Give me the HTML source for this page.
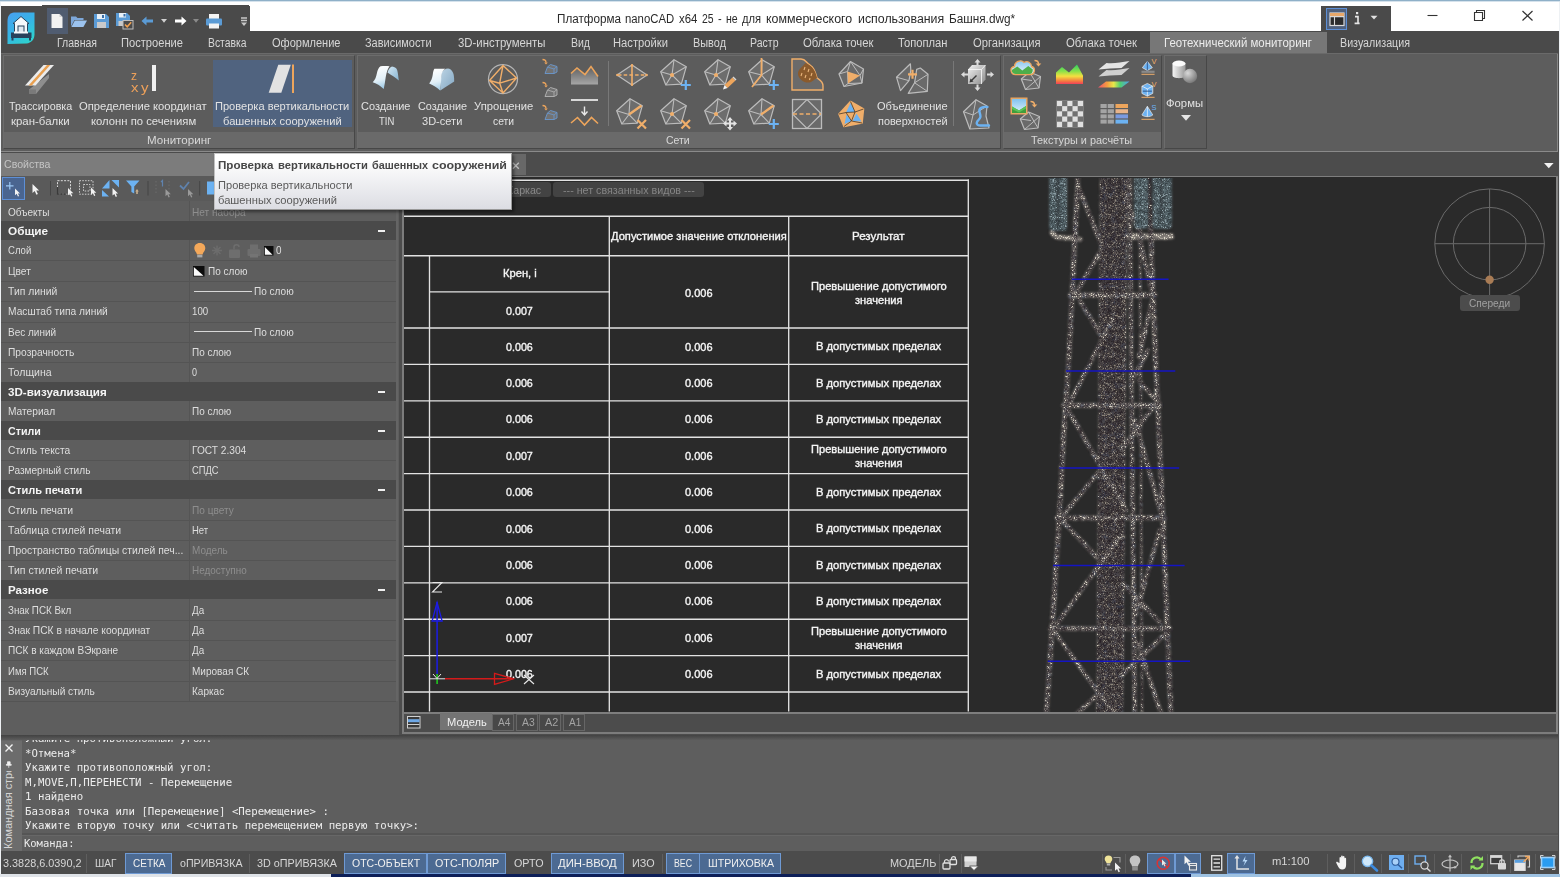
<!DOCTYPE html>
<html lang="ru"><head><meta charset="utf-8"><title>Платформа nanoCAD x64 25 - Башня.dwg</title>
<style>
html,body{margin:0;padding:0;}
body{width:1560px;height:877px;position:relative;overflow:hidden;background:#fff;font-family:"Liberation Sans",sans-serif;}
#app div,#app span,#app svg{position:absolute;box-sizing:border-box;}
#app{position:absolute;left:0;top:0;width:1560px;height:877px;overflow:hidden;}
.t{white-space:nowrap;transform-origin:0 50%;font-family:"Liberation Sans",sans-serif;}
.t.m{font-family:"Liberation Mono",monospace;}
.t.d{font-family:"DejaVu Sans",sans-serif;}
.t.dm{font-family:"DejaVu Sans Mono","Liberation Mono",monospace;}
svg{overflow:visible;}
</style></head><body><div id="app">
<div style="left:0px;top:0px;width:1560px;height:1px;background:#8fb0c8;"></div>
<div style="left:0px;top:1px;width:1560px;height:1px;background:#d5e2ec;"></div>
<div style="left:1px;top:6px;width:249px;height:26px;background:#4a4a4a;"></div>
<div style="left:42px;top:5px;width:207px;height:2px;background:#4a4a4a;"></div>
<div style="left:1px;top:31px;width:1557px;height:22px;background:#4a4a4a;"></div>
<div style="left:1321px;top:5.7px;width:70px;height:26.3px;background:#4a4a4a;"></div>
<span class="t" style="left:556.7px;top:10.5px;font-size:12.5px;line-height:16px;color:#2a2a2a;transform:scaleX(0.9355);">Платформа</span>
<span class="t" style="left:625px;top:10.5px;font-size:12.5px;line-height:16px;color:#2a2a2a;transform:scaleX(0.9077);">nanoCAD</span>
<span class="t" style="left:678.8px;top:10.5px;font-size:12.5px;line-height:16px;color:#2a2a2a;transform:scaleX(0.9130);">x64</span>
<span class="t" style="left:701.7px;top:10.5px;font-size:12.5px;line-height:16px;color:#2a2a2a;transform:scaleX(0.8343);">25</span>
<span class="t" style="left:718px;top:10.5px;font-size:12.5px;line-height:16px;color:#2a2a2a;transform:scaleX(0.8888);">-</span>
<span class="t" style="left:725.8px;top:10.5px;font-size:12.5px;line-height:16px;color:#2a2a2a;transform:scaleX(0.8444);">не</span>
<span class="t" style="left:742.2px;top:10.5px;font-size:12.5px;line-height:16px;color:#2a2a2a;transform:scaleX(0.8943);">для</span>
<span class="t" style="left:765.8px;top:10.5px;font-size:12.5px;line-height:16px;color:#2a2a2a;transform:scaleX(0.9920);">коммерческого</span>
<span class="t" style="left:857.5px;top:10.5px;font-size:12.5px;line-height:16px;color:#2a2a2a;transform:scaleX(0.9893);">использования</span>
<span class="t" style="left:949.2px;top:10.5px;font-size:12.5px;line-height:16px;color:#2a2a2a;transform:scaleX(0.9426);">Башня.dwg*</span>
<svg style="left:1420px;top:6px;" width="130" height="22" viewBox="0 0 130 22"><path d="M7.5 9.5h10" stroke="#333" stroke-width="1.1" fill="none"/><path d="M54.5 6.5h8v8h-8z M56.5 6.5v-2h8v8h-2" stroke="#333" stroke-width="1.1" fill="none"/><path d="M102.5 5l10 9.5 M112.5 5l-10 9.5" stroke="#333" stroke-width="1.2" fill="none"/></svg>
<div style="left:1326px;top:8px;width:21px;height:22px;background:#4f607c;border:1px solid #5d8fd6;"></div>
<svg style="left:1329px;top:11px;" width="16" height="16" viewBox="0 0 16 16"><rect x="1" y="2" width="14" height="12.5" fill="#2b2b2b" stroke="#d9d9d9" stroke-width="1.2"/><rect x="1" y="2" width="14" height="3.2" fill="#e8a86a"/><path d="M5.5 5.5v9 M1 5.6h14" stroke="#d9d9d9" stroke-width="1.1"/></svg>
<svg style="left:1352px;top:10px;" width="10" height="16" viewBox="0 0 10 16"><rect x="4" y="2" width="2.2" height="2.2" fill="#e6e6e6"/><path d="M3 6.6h3v6.6 M2.6 13.4h5" stroke="#e6e6e6" stroke-width="1.6" fill="none"/></svg>
<svg style="left:1370px;top:15px;" width="8" height="6" viewBox="0 0 8 6"><path d="M0.5 0.8h7l-3.5 3.8z" fill="#e0e0e0"/></svg>
<svg style="left:5px;top:10.5px;" width="32" height="34" viewBox="0 0 32 34"><defs><linearGradient id="ab" x1="0" y1="0" x2="0.6" y2="1"><stop offset="0" stop-color="#4a9ff0"/><stop offset="0.55" stop-color="#36b4e6"/><stop offset="1" stop-color="#2fd0d0"/></linearGradient></defs>
<path d="M9 1.5h20.5v22c0 5-3.5 8.5-8 9l-19 0.5v-23c0-5 2.5-8.5 6.500-8.500z" fill="url(#ab)"/>
<path d="M16 5.500l8 7h-1.500v9h-13v-9h-1.500z" fill="#f4f8fb" stroke="#27425c" stroke-width="1"/>
<rect x="13" y="15" width="6" height="6.500" fill="#dfe9f1" stroke="#27425c" stroke-width="1"/>
<path d="M6 21.500h20.500v5.500h-20.500z" fill="#27425c"/><path d="M7.500 27v2.500 M25 27v2.500" stroke="#27425c" stroke-width="2"/>
<rect x="9" y="20.500" width="14" height="2" fill="#f4f8fb"/></svg>
<div style="left:47px;top:8px;width:21px;height:26px;background:#505c70;"></div>
<svg style="left:50px;top:13px;" width="14" height="16" viewBox="0 0 14 16"><path d="M1.5 1h8l3 3v11h-11z" fill="#f2f2f2"/><path d="M9.500 1v3h3" fill="#cfcfcf"/></svg>
<svg style="left:70px;top:14px;" width="18" height="14" viewBox="0 0 18 14"><path d="M1 2.500h5l1.500 1.500h6v2h-9l-3.500 6.500z" fill="#7da7d9"/><path d="M4.800 6.500h12.200l-3.600 6.500h-12z" fill="#9cc3ee"/></svg>
<svg style="left:93px;top:13px;" width="17" height="16" viewBox="0 0 17 16"><path d="M1 1h12l3 3v11h-15z" fill="#5b9bd5"/><rect x="4" y="1" width="8" height="5" fill="#e9f1f8"/><rect x="9" y="2" width="2" height="3" fill="#3b6ea5"/><rect x="4" y="9" width="9" height="6" fill="#c9c9c9"/></svg>
<svg style="left:115px;top:12px;" width="19" height="18" viewBox="0 0 19 18"><path d="M1 1h11l3 3v10h-14z" fill="#5b9bd5"/><rect x="4" y="1" width="7" height="4.500" fill="#e9f1f8"/><rect x="8.500" y="2" width="2" height="2.500" fill="#3b6ea5"/><rect x="3.500" y="9" width="6" height="5" fill="#c9c9c9"/><rect x="8" y="8.500" width="10" height="8.500" fill="#4a4a4a" stroke="#bdbdbd" stroke-width="1"/><path d="M10 12.500l2.200 2.300 4-4.500" stroke="#f0a050" stroke-width="1.600" fill="none"/></svg>
<svg style="left:141px;top:16px;" width="13" height="10" viewBox="0 0 13 10"><path d="M0.500 5l5-4.500v3h6.500v3h-6.500v3z" fill="#5b9bd5"/></svg>
<svg style="left:161px;top:19px;" width="6" height="4" viewBox="0 0 6 4"><path d="M0 0h6l-3 3.800z" fill="#d0d0d0"/></svg>
<svg style="left:174px;top:16px;" width="13" height="10" viewBox="0 0 13 10"><path d="M12.500 5l-5-4.500v3h-6.500v3h6.500v3z" fill="#ffffff"/></svg>
<svg style="left:193px;top:19px;" width="6" height="4" viewBox="0 0 6 4"><path d="M0 0h6l-3 3.800z" fill="#8a8a8a"/></svg>
<svg style="left:205px;top:13px;" width="18" height="16" viewBox="0 0 18 16"><rect x="4" y="1" width="10" height="5" fill="#f4f4f4"/><rect x="1" y="5.500" width="16" height="7" rx="1" fill="#5b9bd5"/><rect x="4" y="10.500" width="10" height="5" fill="#f4f4f4"/></svg>
<svg style="left:240px;top:17px;" width="8" height="10" viewBox="0 0 8 10"><path d="M1 1h6 M1 3.500h6" stroke="#c8c8c8" stroke-width="1.300"/><path d="M1 5.500h6l-3 3.500z" fill="#c8c8c8"/></svg>
<div style="left:1150px;top:32px;width:177px;height:21px;background:#777777;"></div>
<span class="t" style="left:56.5px;top:34.9px;font-size:12px;line-height:16px;color:#d6d6d6;transform:scaleX(0.8758);">Главная</span>
<span class="t" style="left:121px;top:34.9px;font-size:12px;line-height:16px;color:#d6d6d6;transform:scaleX(0.9278);">Построение</span>
<span class="t" style="left:207.5px;top:34.9px;font-size:12px;line-height:16px;color:#d6d6d6;transform:scaleX(0.8632);">Вставка</span>
<span class="t" style="left:271.5px;top:34.9px;font-size:12px;line-height:16px;color:#d6d6d6;transform:scaleX(0.9196);">Оформление</span>
<span class="t" style="left:365px;top:34.9px;font-size:12px;line-height:16px;color:#d6d6d6;transform:scaleX(0.9131);">Зависимости</span>
<span class="t" style="left:458px;top:34.9px;font-size:12px;line-height:16px;color:#d6d6d6;transform:scaleX(0.9486);">3D-инструменты</span>
<span class="t" style="left:570.5px;top:34.9px;font-size:12px;line-height:16px;color:#d6d6d6;transform:scaleX(0.8752);">Вид</span>
<span class="t" style="left:613px;top:34.9px;font-size:12px;line-height:16px;color:#d6d6d6;transform:scaleX(0.9347);">Настройки</span>
<span class="t" style="left:692.7px;top:34.9px;font-size:12px;line-height:16px;color:#d6d6d6;transform:scaleX(0.9095);">Вывод</span>
<span class="t" style="left:749.5px;top:34.9px;font-size:12px;line-height:16px;color:#d6d6d6;transform:scaleX(0.8783);">Растр</span>
<span class="t" style="left:802.5px;top:34.9px;font-size:12px;line-height:16px;color:#d6d6d6;transform:scaleX(0.9423);">Облака точек</span>
<span class="t" style="left:898px;top:34.9px;font-size:12px;line-height:16px;color:#d6d6d6;transform:scaleX(0.9333);">Топоплан</span>
<span class="t" style="left:972.5px;top:34.9px;font-size:12px;line-height:16px;color:#d6d6d6;transform:scaleX(0.9326);">Организация</span>
<span class="t" style="left:1066px;top:34.9px;font-size:12px;line-height:16px;color:#d6d6d6;transform:scaleX(0.9490);">Облака точек</span>
<span class="t" style="left:1340px;top:34.9px;font-size:12px;line-height:16px;color:#d6d6d6;transform:scaleX(0.8909);">Визуализация</span>
<span class="t" style="left:1164px;top:34.9px;font-size:12px;line-height:16px;color:#ececec;transform:scaleX(0.9520);">Геотехнический мониторинг</span>
<div style="left:1px;top:53px;width:1557px;height:98px;background:#5d5d5d;"></div>
<div style="left:1px;top:53px;width:1557px;height:1px;background:#6a6a6a;"></div>
<div style="left:1557px;top:54px;width:1.3px;height:97px;background:#868686;"></div>
<div style="left:1px;top:150.9px;width:1557px;height:1.2px;background:#8a8a8a;"></div>
<div style="left:1px;top:152.1px;width:1557px;height:1px;background:#4c4c4c;"></div>
<div style="left:3px;top:55px;width:352px;height:94px;background:#5c5c5c;border:1px solid #474747;border-top-color:#6c6c6c;border-left-color:#6c6c6c;"></div>
<div style="left:4px;top:131.8px;width:350px;height:16.2px;background:#696969;"></div>
<span class="t" style="left:146.7px;top:132.5px;font-size:11.5px;line-height:15px;color:#d8d8d8;transform:scaleX(1.0082);">Мониторинг</span>
<div style="left:357px;top:55px;width:644px;height:94px;background:#5c5c5c;border:1px solid #474747;border-top-color:#6c6c6c;border-left-color:#6c6c6c;"></div>
<div style="left:358px;top:131.8px;width:642px;height:16.2px;background:#6a6a6a;"></div>
<span class="t" style="left:666.3px;top:132.5px;font-size:11.5px;line-height:15px;color:#d8d8d8;transform:scaleX(0.9112);">Сети</span>
<div style="left:1003px;top:55px;width:159px;height:94px;background:#5c5c5c;border:1px solid #474747;border-top-color:#6c6c6c;border-left-color:#6c6c6c;"></div>
<div style="left:1004px;top:131.8px;width:157px;height:16.2px;background:#696969;"></div>
<span class="t" style="left:1031.3px;top:132.5px;font-size:11.5px;line-height:15px;color:#d8d8d8;transform:scaleX(0.9483);">Текстуры и расчёты</span>
<div style="left:1164px;top:55px;width:43px;height:94px;background:#5c5c5c;border:1px solid #474747;border-top-color:#6c6c6c;border-left-color:#6c6c6c;"></div>
<div style="left:213px;top:60px;width:139px;height:67px;background:#50637f;"></div>
<span class="t" style="left:8.7px;top:99.0px;font-size:11.5px;line-height:15px;color:#e2e2e2;transform:scaleX(0.9353);">Трассировка</span>
<span class="t" style="left:10.7px;top:114.0px;font-size:11.5px;line-height:15px;color:#e2e2e2;transform:scaleX(0.9951);">кран-балки</span>
<span class="t" style="left:79px;top:99.0px;font-size:11.5px;line-height:15px;color:#e2e2e2;transform:scaleX(0.9756);">Определение координат</span>
<span class="t" style="left:90.8px;top:114.0px;font-size:11.5px;line-height:15px;color:#e2e2e2;transform:scaleX(0.9803);">колонн по сечениям</span>
<span class="t" style="left:215px;top:99.0px;font-size:11.5px;line-height:15px;color:#e2e2e2;transform:scaleX(0.9628);">Проверка вертикальности</span>
<span class="t" style="left:223px;top:114.0px;font-size:11.5px;line-height:15px;color:#e2e2e2;transform:scaleX(0.9701);">башенных сооружений</span>
<span class="t" style="left:361.3px;top:99.0px;font-size:11.5px;line-height:15px;color:#e2e2e2;transform:scaleX(0.9524);">Создание</span>
<span class="t" style="left:378.7px;top:114.0px;font-size:11.5px;line-height:15px;color:#e2e2e2;transform:scaleX(0.8259);">TIN</span>
<span class="t" style="left:417.7px;top:99.0px;font-size:11.5px;line-height:15px;color:#e2e2e2;transform:scaleX(0.9447);">Создание</span>
<span class="t" style="left:422px;top:114.0px;font-size:11.5px;line-height:15px;color:#e2e2e2;transform:scaleX(0.9598);">3D-сети</span>
<span class="t" style="left:474px;top:99.0px;font-size:11.5px;line-height:15px;color:#e2e2e2;transform:scaleX(0.9768);">Упрощение</span>
<span class="t" style="left:493.3px;top:114.0px;font-size:11.5px;line-height:15px;color:#e2e2e2;transform:scaleX(0.8953);">сети</span>
<span class="t" style="left:876.7px;top:99.0px;font-size:11.5px;line-height:15px;color:#e2e2e2;transform:scaleX(0.9601);">Объединение</span>
<span class="t" style="left:877.7px;top:114.0px;font-size:11.5px;line-height:15px;color:#e2e2e2;transform:scaleX(0.9473);">поверхностей</span>
<span class="t" style="left:1166.3px;top:95.8px;font-size:11.5px;line-height:15px;color:#e2e2e2;transform:scaleX(0.9813);">Формы</span>
<svg style="left:1181px;top:114.5px;" width="10" height="6" viewBox="0 0 10 6"><path d="M0 0h10l-5 5.800z" fill="#e6e6e6"/></svg>
<svg style="left:24px;top:64px;" width="31" height="31" viewBox="0 0 31 31"><path d="M5 25.500l0.500 4.500h6.500l13-16v-4z" fill="#8e8e8e"/><path d="M5 25.500l7 0 0 4.500-6.500 0z" fill="#7a7a7a"/><path d="M19.500 1h10.500l-18.500 20.500h-10.500z" fill="#ececec"/><path d="M23 1h3.300l-18.500 20.500h-3.300z" fill="#e9a050"/></svg>
<span class="t" style="left:131px;top:67.0px;font-size:13px;line-height:17px;color:#eda05a;transform:scaleX(0.9231);">z</span>
<span class="t" style="left:130.5px;top:79.0px;font-size:13px;line-height:17px;color:#eda05a;transform:scaleX(1.1538);">x</span>
<span class="t" style="left:140.5px;top:79.0px;font-size:13px;line-height:17px;color:#eda05a;transform:scaleX(1.1538);">y</span>
<div style="left:152px;top:64.7px;width:4px;height:26px;background:#f0f0f0;"></div>
<svg style="left:268px;top:64px;" width="28" height="30" viewBox="0 0 28 30"><path d="M10.300 0.700h12.500l-9.500 28h-12.600z" fill="#e2e2e2"/><path d="M25 0.500v28.500" stroke="#eda55c" stroke-width="2"/></svg>
<svg style="left:372px;top:65px;" width="28" height="26" viewBox="0 0 28 26"><defs><linearGradient id="tn" x1="0.300" y1="0" x2="0.500" y2="1"><stop offset="0" stop-color="#ffffff"/><stop offset="0.600" stop-color="#e2f0f8"/><stop offset="1" stop-color="#9cc8e4"/></linearGradient><linearGradient id="tn2" x1="0" y1="0" x2="1" y2="1"><stop offset="0" stop-color="#d4e8f4"/><stop offset="1" stop-color="#86b4d2"/></linearGradient></defs>
<path d="M15.500 7.500c1-3 2.500-5.500 4.500-6c3 0.300 4.500 1.500 5.300 4c0.800 3.500 1 6.500 1.500 10c-3.500-3-7.500-5.500-11.300-8z" fill="url(#tn2)"/>
<path d="M8.500 1.300c3-0.300 6-0.300 9 0c-2 2.500-3 6.500-3.800 11c-0.500 4-1.200 8-2 11.700c-3-3-6.500-5-11-6.700c2.500-2.500 3.500-5.500 4.200-9c0.700-3 1.500-5.500 3.600-7z" fill="url(#tn)"/></svg>
<svg style="left:428px;top:67px;" width="28" height="25" viewBox="0 0 28 25"><defs><linearGradient id="tm" x1="0.300" y1="0" x2="0.500" y2="1"><stop offset="0" stop-color="#ffffff"/><stop offset="0.600" stop-color="#e2f0f8"/><stop offset="1" stop-color="#a4cce6"/></linearGradient><linearGradient id="tm2" x1="0" y1="0" x2="1" y2="1"><stop offset="0" stop-color="#bcd4e4"/><stop offset="1" stop-color="#84a8c4"/></linearGradient></defs>
<path d="M13.400 6c1.500-3 4-4.500 6.600-4.500c3.500 0.500 5.200 3.500 5.800 7c0.300 2 0.400 4 0.400 6l-14 9z" fill="url(#tm2)"/>
<path d="M6.400 1.800h10.900c-2.500 1.500-3.600 4-3.900 7.500c-0.300 5-0.600 9.500-1.300 14.100c-3.500-3-6.500-5-10.900-6.800c2-2.500 3-5.500 3.500-8.500c0.300-2.500 0.700-4.800 1.700-6.300z" fill="url(#tm)"/></svg>
<svg style="left:488px;top:64px;" width="30" height="30" viewBox="0 0 30 30"><circle cx="15" cy="15.100" r="14.500" fill="none" stroke="#b4b4b4" stroke-width="1.300"/><path d="M15 1.500L1.500 16.500L15 29L28.500 14Z M15 1.500L11.700 19.200L15 29 M1.500 16.500L11.700 19.200L28.500 14" fill="none" stroke="#f0ae6a" stroke-width="1.400" stroke-linejoin="round"/></svg>
<svg style="left:542px;top:58px;" width="17" height="17" viewBox="0 0 17 17"><path d="M0.500 1.500c2 0 3.500 0.500 3.500 3" stroke="#eda55c" stroke-width="1.300" fill="none"/><path d="M2.200 4.500h3.600l-1.800 2z" fill="#eda55c"/><path d="M3 15.500l2.500-6.500l3-2.500l6.500 2v5.500l-3 1.500z" fill="#727272" stroke="#6a98d0" stroke-width="0.900"/><path d="M5.500 9l6.500 2 3-2.500 M12 11l0 4.500" stroke="#6a98d0" stroke-width="0.800" fill="none"/></svg>
<svg style="left:542px;top:80.5px;" width="17" height="17" viewBox="0 0 17 17"><path d="M0.500 1.500c2 0 3.500 0.500 3.500 3" stroke="#eda55c" stroke-width="1.300" fill="none"/><path d="M2.200 4.500h3.600l-1.800 2z" fill="#eda55c"/><path d="M3 15.500l2.500-6.500l3-2.500l6.500 2v5.500l-3 1.500z" fill="#727272" stroke="#b4b4b4" stroke-width="0.900"/><path d="M5.500 9l6.500 2 3-2.500 M12 11l0 4.500" stroke="#b4b4b4" stroke-width="0.800" fill="none"/></svg>
<svg style="left:542px;top:103.5px;" width="17" height="17" viewBox="0 0 17 17"><path d="M0.500 1.500c2 0 3.500 0.500 3.500 3" stroke="#eda55c" stroke-width="1.300" fill="none"/><path d="M2.200 4.500h3.600l-1.800 2z" fill="#eda55c"/><path d="M3 15.500l2.500-6.500l3-2.500l6.500 2v5.500l-3 1.500z" fill="#727272" stroke="#6a98d0" stroke-width="0.900"/><path d="M5.500 9l6.500 2 3-2.500 M12 11l0 4.500" stroke="#6a98d0" stroke-width="0.800" fill="none"/></svg>
<svg style="left:570px;top:64px;" width="29" height="22" viewBox="0 0 29 22"><defs><linearGradient id="pg" x1="0" y1="0" x2="0" y2="1"><stop offset="0" stop-color="#5e5e5e"/><stop offset="1" stop-color="#a6a6a6"/></linearGradient></defs>
<path d="M1 9.500l6-5.500l8 6.500l6-8l7 10v8h-27z" fill="url(#pg)"/><path d="M1 9.500l6-5.500l8 6.500l6-8l7 10" fill="none" stroke="#eda55c" stroke-width="1.600"/></svg>
<svg style="left:570px;top:98px;" width="29" height="30" viewBox="0 0 29 30"><path d="M1 2h27" stroke="#d8d8d8" stroke-width="2"/><path d="M14.500 8.500v8 M11.500 13.500l3 3.500 3-3.500" stroke="#e8e8e8" stroke-width="1.400" fill="none"/><path d="M1 25l6.500-5.500l7 7.500l7-7.500l6.500 6" fill="none" stroke="#eda55c" stroke-width="1.600"/></svg>
<div style="left:607.5px;top:61px;width:1px;height:64.5px;background:#787878;"></div>
<div style="left:953px;top:61px;width:1px;height:64.5px;background:#787878;"></div>
<svg style="left:615.5px;top:64px;" width="32" height="22" viewBox="0 0 32 22"><path d="M1 11L16 1L31 11L16 21Z" fill="#6a6a6a" stroke="#bcbcbc" stroke-width="1.200"/><path d="M16 1v20" stroke="#f0ae6a" stroke-width="1.600"/><path d="M2 11h28" stroke="#f0ae6a" stroke-width="1.500" stroke-dasharray="3.500 2.200"/><circle cx="1.500" cy="11" r="1.300" fill="#f0ae6a"/><circle cx="30.500" cy="11" r="1.300" fill="#f0ae6a"/><circle cx="16" cy="1.300" r="1.200" fill="#f0ae6a"/><circle cx="16" cy="20.700" r="1.200" fill="#f0ae6a"/></svg>
<svg style="left:615.5px;top:97px;" width="34" height="34" viewBox="0 0 34 34"><path d="M14 1.700L26.300 8.700L21.300 26.200L5.800 27L0.700 13.700Z" fill="#6d6d6d" stroke="#bcbcbc" stroke-width="1.200" stroke-linejoin="round"/><path d="M14 1.700L13 17.5L26.300 8.700M21.300 26.200L13 17.5L5.800 27M0.700 13.700L13 17.5" fill="none" stroke="#bcbcbc" stroke-width="1.100"/><path d="M13 17.500L25.500 8.500" stroke="#f0ae6a" stroke-width="2.200"/><path d="M21.500 23l8.500 8.500M30 23l-8.500 8.500" stroke="#f0ae6a" stroke-width="2.200"/><rect x="19" y="20" width="13" height="13" fill="#5c5c5c" opacity="0"/></svg>
<svg style="left:660px;top:58px;" width="34" height="34" viewBox="0 0 34 34"><path d="M14 1.700L26.300 8.700L21.300 26.200L5.800 27L0.700 13.700Z" fill="#6d6d6d" stroke="#bcbcbc" stroke-width="1.200" stroke-linejoin="round"/><path d="M14 1.700L12 17L26.300 8.700M21.300 26.200L12 17L5.800 27M0.700 13.700L12 17" fill="none" stroke="#bcbcbc" stroke-width="1.100"/><circle cx="12" cy="17" r="2.100" fill="#f0ae6a"/><path d="M20.800 27h10M25.800 22v10" stroke="#6cb2f2" stroke-width="2.200"/></svg>
<svg style="left:660px;top:97px;" width="34" height="34" viewBox="0 0 34 34"><path d="M14 1.700L26.300 8.700L21.300 26.200L5.800 27L0.700 13.700Z" fill="#6d6d6d" stroke="#bcbcbc" stroke-width="1.200" stroke-linejoin="round"/><path d="M14 1.700L12 17L26.300 8.700M21.300 26.200L12 17L5.800 27M0.700 13.700L12 17" fill="none" stroke="#bcbcbc" stroke-width="1.100"/><circle cx="12" cy="17" r="2.100" fill="#f0ae6a"/><path d="M21.500 23l8.500 8.500M30 23l-8.500 8.500" stroke="#f0ae6a" stroke-width="2.200"/><rect x="19" y="20" width="13" height="13" fill="#5c5c5c" opacity="0"/></svg>
<svg style="left:704px;top:58px;" width="34" height="34" viewBox="0 0 34 34"><path d="M14 1.700L26.300 8.700L21.300 26.200L5.800 27L0.700 13.700Z" fill="#6d6d6d" stroke="#bcbcbc" stroke-width="1.200" stroke-linejoin="round"/><path d="M14 1.700L12 17L26.300 8.700M21.300 26.200L12 17L5.800 27M0.700 13.700L12 17" fill="none" stroke="#bcbcbc" stroke-width="1.100"/><circle cx="12" cy="17" r="2.100" fill="#f0ae6a"/><path d="M20.500 27l8-7.500l3 3l-8 7.500z" fill="#eda55c"/><path d="M28.500 19.500l1-1l3 3l-1 1z" fill="#d8d8d8"/><path d="M20.500 27l-1.500 4.500l4.500-1.500z" fill="#f4f4f4"/></svg>
<svg style="left:704px;top:97px;" width="34" height="34" viewBox="0 0 34 34"><path d="M14 1.700L26.300 8.700L21.300 26.200L5.800 27L0.700 13.700Z" fill="#6d6d6d" stroke="#bcbcbc" stroke-width="1.200" stroke-linejoin="round"/><path d="M14 1.700L12 17L26.300 8.700M21.300 26.200L12 17L5.800 27M0.700 13.700L12 17" fill="none" stroke="#bcbcbc" stroke-width="1.100"/><circle cx="12" cy="17" r="2.100" fill="#f0ae6a"/><path d="M26 20l3 3.500h-2v2h2.500v-2l3.500 3l-3.500 3v-2h-2.500v2.500h2l-3 3.500l-3-3.500h2v-2.500h-2.500v2l-3.500-3l3.500-3v2h2.500v-2h-2z" fill="#e4e4e4"/></svg>
<svg style="left:748px;top:58px;" width="34" height="34" viewBox="0 0 34 34"><path d="M14 1.700L26.300 8.700L21.300 26.200L5.800 27L0.700 13.700Z" fill="#6d6d6d" stroke="#bcbcbc" stroke-width="1.200" stroke-linejoin="round"/><path d="M14 1.700L13.5 17L26.300 8.700M21.300 26.200L13.5 17L5.800 27M0.700 13.700L13.5 17" fill="none" stroke="#bcbcbc" stroke-width="1.100"/><path d="M13.500 0v17l-9.500 12" stroke="#f0ae6a" stroke-width="1.800" fill="none"/><path d="M20.800 27h10M25.800 22v10" stroke="#6cb2f2" stroke-width="2.200"/></svg>
<svg style="left:748px;top:97px;" width="34" height="34" viewBox="0 0 34 34"><path d="M14 1.700L26.300 8.700L21.300 26.200L5.800 27L0.700 13.700Z" fill="#6d6d6d" stroke="#bcbcbc" stroke-width="1.200" stroke-linejoin="round"/><path d="M14 1.700L13 17.5L26.300 8.700M21.300 26.200L13 17.5L5.800 27M0.700 13.700L13 17.5" fill="none" stroke="#bcbcbc" stroke-width="1.100"/><path d="M13 17.500L25.500 8.500" stroke="#f0ae6a" stroke-width="2.200"/><path d="M20.800 27h10M25.800 22v10" stroke="#6cb2f2" stroke-width="2.200"/></svg>
<svg style="left:791px;top:58px;" width="33" height="33" viewBox="0 0 33 33"><path d="M1 1h9c5 0 5 4 9 6c5 3 6 9 7 13c3 2 6 3 6 8v4h-31z" fill="#6a6a6a" stroke="#f0ae6a" stroke-width="1.400"/><path d="M14.500 5c3 1 6 3 8.500 7c2 3 2.500 6 3 8c-3 1-4 4-8 4.500c-5 0.500-10-3-11-8c-0.500-5 4-7 7.500-11.500z" fill="#8a5a2c"/><path d="M14 9l-1 3M18 11l-1 3M21 15l-1 3M11 15l-1 3M15 17l-1 3M19 20l-0.500 2" stroke="#e8b47a" stroke-width="1.100"/></svg>
<svg style="left:791px;top:97.5px;" width="32" height="32" viewBox="0 0 32 32"><rect x="1.500" y="1.500" width="29" height="29" fill="#6a6a6a" stroke="#bcbcbc" stroke-width="1.300"/><path d="M1.500 16L16 1.500L30.500 16L16 30.500Z" fill="none" stroke="#bcbcbc" stroke-width="1.200"/><path d="M2 16h28" stroke="#f0ae6a" stroke-width="1.600" stroke-dasharray="4 2.500"/></svg>
<svg style="left:837.5px;top:60px;" width="27" height="28" viewBox="0 0 27 28"><path d="M12.500 1.500L25.500 9L24 23L6 26.500L1 14Z" fill="#6a6a6a" stroke="#bcbcbc" stroke-width="1.200" stroke-linejoin="round"/><path d="M12.500 1.500L9.500 11.500L1 14M9.500 11.500L10 23.500L6 26.500M12.500 1.500L22 15.500L25.500 9M22 15.500L24 23M10 23.500L24 23" fill="none" stroke="#bcbcbc" stroke-width="1"/><path d="M9.500 11.500L22 15.500L10 23.500Z" fill="#f0ae6a"/></svg>
<svg style="left:837.5px;top:100px;" width="27" height="28" viewBox="0 0 27 28"><path d="M12.500 1.500L25.500 9L24 23L6 26.500L1 14Z" fill="#f0ae6a" stroke="#f0ae6a" stroke-width="1.600" stroke-linejoin="round"/><path d="M12.500 3L17 12L8 12.500Z M8.500 14.500L13.500 21L6.500 24Z M18.500 13.500L23.500 21.500L14.500 21Z" fill="#6cb2f2"/><path d="M12.500 1.500L17 12L25.500 9M17 12L8 12.500L1 14M8 12.500L13.500 21L6 26.500M13.500 21L24 23M17 12L13.500 21" fill="none" stroke="#4a3a2a" stroke-width="0.800"/></svg>
<svg style="left:896px;top:63px;" width="33" height="32" viewBox="0 0 33 32"><path d="M14.400 0.800L0.500 14.200L4.500 27.600L13 17.700L14.800 7.100Z" fill="#6a6a6a" stroke="#bcbcbc" stroke-width="1.200" stroke-linejoin="round"/><path d="M0.500 14.200L13 17.700" stroke="#bcbcbc" stroke-width="1" fill="none"/><path d="M20.700 6.400L24.300 5L32 11.300L31.300 28.300L12.300 30.400L18.600 19.800Z" fill="#6a6a6a" stroke="#bcbcbc" stroke-width="1.200" stroke-linejoin="round"/><path d="M18.600 19.800L32 11.300M18.600 19.800L31.300 28.300" stroke="#bcbcbc" stroke-width="1" fill="none"/><path d="M12 11.300h9M16.500 6.800v9" stroke="#f0ae6a" stroke-width="2.200"/></svg>
<svg style="left:961px;top:59px;" width="33" height="32" viewBox="0 0 33 32"><defs><linearGradient id="cb" x1="0" y1="0" x2="1" y2="1"><stop offset="0" stop-color="#f2f2f2"/><stop offset="1" stop-color="#8c8c8c"/></linearGradient></defs>
<path d="M7 10.500l4-4.500h13.500v14.500l-4 4.500h-13.500z" fill="url(#cb)"/><path d="M7 10.500h13.500v14.500M20.500 10.500l4-4.500" stroke="#fafafa" stroke-width="0.800" fill="none"/>
<path d="M16.500 0l3 3.500h-2v3h-2v-3h-2z M16.500 32l3-3.500h-2v-3h-2v3h-2z M0 15.500l3.500-3v2h3.500v2h-3.500v2z M33 15.500l-3.500-3v2h-3.500v2h3.500v2z" fill="#dcdcdc"/><path d="M9.500 22.500l6-6" stroke="#3a3a3a" stroke-width="1.500"/><path d="M8.500 23.500l1-4 3 3z" fill="#3a3a3a"/></svg>
<svg style="left:962px;top:97.5px;" width="32" height="33" viewBox="0 0 32 33"><path d="M14 1.700L25 8L24 18L27 30L7.800 31L1.500 13.700Z" fill="#6a6a6a" stroke="#bcbcbc" stroke-width="1.200" stroke-linejoin="round"/><path d="M14 1.700L11 17L1.500 13.700M11 17L7.800 31M25 8L11 17" fill="none" stroke="#bcbcbc" stroke-width="1"/><path d="M25.500 9c-5-0.500-9 1-8 5c1 4 2 5-1 8c-3 3-2 5.500 2 5.500h8.500" fill="none" stroke="#6cb2f2" stroke-width="2.400" stroke-linecap="round"/></svg>
<svg style="left:1010px;top:58px;" width="33" height="33" viewBox="0 0 33 33"><g transform="translate(10.5 13)"><path d="M9 1L20 5.500L18.500 17L5 18.500L0.800 8Z" fill="#6a6a6a" stroke="#bcbcbc" stroke-width="1.200" stroke-linejoin="round"/><path d="M9 1L18.500 17M20 5.500L5 18.500M0.800 8L11.500 9.500" stroke="#bcbcbc" stroke-width="1" fill="none"/></g><defs><linearGradient id="sk" x1="0" y1="0" x2="0" y2="1"><stop offset="0" stop-color="#8ec8f0"/><stop offset="1" stop-color="#eaf6fc"/></linearGradient></defs>
<path d="M5.500 16.500c-5 0-6.500-7-1-8c0-5 6.500-7.500 9.500-4c3.500-2 7.500 0 7.500 4c4.500 1 3.500 8-1 8z" fill="url(#sk)" stroke="#eda55c" stroke-width="1.300"/><path d="M1.800 12l5.500-3.500l5 4l6-4.500l4.500 3.500c0 3-1 4.500-3.500 4.500h-13.500c-2.500 0-4-1.500-4-4z" fill="#4eae4a"/><path d="M24.500 2.500c2.500 0 4 0.500 4 3.500" stroke="#f0ae6a" stroke-width="1.500" fill="none"/><path d="M25.700 5.500h5.600l-2.800 3z" fill="#f0ae6a"/></svg>
<svg style="left:1010px;top:97px;" width="33" height="34" viewBox="0 0 33 34"><g transform="translate(9.5 14)"><path d="M9 1L20 5.500L18.500 17L5 18.500L0.800 8Z" fill="#6a6a6a" stroke="#bcbcbc" stroke-width="1.200" stroke-linejoin="round"/><path d="M9 1L18.500 17M20 5.500L5 18.500M0.800 8L11.500 9.500" stroke="#bcbcbc" stroke-width="1" fill="none"/></g><defs><linearGradient id="sk2" x1="0" y1="0" x2="0" y2="1"><stop offset="0" stop-color="#7cc0ee"/><stop offset="1" stop-color="#e6f4fb"/></linearGradient></defs>
<rect x="1.200" y="1.200" width="15.600" height="15.600" fill="url(#sk2)" stroke="#eda55c" stroke-width="1.400"/><path d="M2 9.500l7 4l7-4.500v7h-14z" fill="#3f9e3c"/><path d="M2 9.500l7 4l7-4.500v2.500l-7 4l-7-3.500z" fill="#5cc257"/><path d="M20.500 4.500c2.500 0 4 0.500 4 3.500" stroke="#f0ae6a" stroke-width="1.500" fill="none"/><path d="M21.700 7.500h5.600l-2.800 3z" fill="#f0ae6a"/></svg>
<svg style="left:1055px;top:64px;" width="29" height="21" viewBox="0 0 29 21"><defs><linearGradient id="ht" x1="0" y1="0" x2="0" y2="1"><stop offset="0" stop-color="#2fd060"/><stop offset="0.350" stop-color="#8be04a"/><stop offset="0.600" stop-color="#f4e040"/><stop offset="0.850" stop-color="#f47a40"/><stop offset="1" stop-color="#f0405a"/></linearGradient></defs>
<path d="M1 8.500l6-5.500l7 5.500l8-8l6 11v8.500h-27z" fill="url(#ht)"/></svg>
<svg style="left:1056px;top:100px;" width="28" height="28" viewBox="0 0 28 28"><rect x="0.500" y="0.500" width="27" height="27" fill="#9a9a9a"/><rect x="1.0" y="1.0" width="5.200" height="5.200" fill="#e0e0e0"/><rect x="1.0" y="6.2" width="5.200" height="5.200" fill="#707070"/><rect x="1.0" y="11.4" width="5.200" height="5.200" fill="#e0e0e0"/><rect x="1.0" y="16.6" width="5.200" height="5.200" fill="#707070"/><rect x="1.0" y="21.8" width="5.200" height="5.200" fill="#e0e0e0"/><rect x="6.2" y="1.0" width="5.200" height="5.200" fill="#707070"/><rect x="6.2" y="6.2" width="5.200" height="5.200" fill="#e0e0e0"/><rect x="6.2" y="11.4" width="5.200" height="5.200" fill="#707070"/><rect x="6.2" y="16.6" width="5.200" height="5.200" fill="#e0e0e0"/><rect x="6.2" y="21.8" width="5.200" height="5.200" fill="#707070"/><rect x="11.4" y="1.0" width="5.200" height="5.200" fill="#e0e0e0"/><rect x="11.4" y="6.2" width="5.200" height="5.200" fill="#707070"/><rect x="11.4" y="11.4" width="5.200" height="5.200" fill="#e0e0e0"/><rect x="11.4" y="16.6" width="5.200" height="5.200" fill="#707070"/><rect x="11.4" y="21.8" width="5.200" height="5.200" fill="#e0e0e0"/><rect x="16.6" y="1.0" width="5.200" height="5.200" fill="#707070"/><rect x="16.6" y="6.2" width="5.200" height="5.200" fill="#e0e0e0"/><rect x="16.6" y="11.4" width="5.200" height="5.200" fill="#707070"/><rect x="16.6" y="16.6" width="5.200" height="5.200" fill="#e0e0e0"/><rect x="16.6" y="21.8" width="5.200" height="5.200" fill="#707070"/><rect x="21.8" y="1.0" width="5.200" height="5.200" fill="#e0e0e0"/><rect x="21.8" y="6.2" width="5.200" height="5.200" fill="#707070"/><rect x="21.8" y="11.4" width="5.200" height="5.200" fill="#e0e0e0"/><rect x="21.8" y="16.6" width="5.200" height="5.200" fill="#707070"/><rect x="21.8" y="21.8" width="5.200" height="5.200" fill="#e0e0e0"/></svg>
<svg style="left:1098px;top:60px;" width="32" height="29" viewBox="0 0 32 29"><defs><linearGradient id="rb" x1="0" y1="0" x2="1" y2="0"><stop offset="0" stop-color="#f0506a"/><stop offset="0.300" stop-color="#f4a040"/><stop offset="0.500" stop-color="#e8e84a"/><stop offset="0.700" stop-color="#50d070"/><stop offset="1" stop-color="#50a0f0"/></linearGradient></defs>
<path d="M0.500 9.500l8-6.500c8 1 14-1 23-2l-8 7c-8 0-15 1-23 1.500z" fill="#e4e4e4"/><path d="M0.500 16.500l8-6.500c8 1 14-1 23-2l-8 7c-8 0-15 1-23 1.500z" fill="#cfcfcf"/><path d="M0 27.500l8-6h23.500l-8 6z" fill="url(#rb)"/></svg>
<svg style="left:1099.5px;top:102.5px;" width="29" height="22" viewBox="0 0 29 22"><rect x="0.5" y="1.0" width="6.200" height="4" fill="#a4a4a4"/><rect x="7.7" y="1.0" width="6.200" height="4" fill="#a4a4a4"/><rect x="15.500" y="1.0" width="12.500" height="4" fill="#eda55c"/><rect x="0.5" y="6.2" width="6.200" height="4" fill="#a4a4a4"/><rect x="7.7" y="6.2" width="6.200" height="4" fill="#a4a4a4"/><rect x="15.500" y="6.2" width="12.500" height="4" fill="#e8b48a"/><rect x="0.5" y="11.4" width="6.200" height="4" fill="#a4a4a4"/><rect x="7.7" y="11.4" width="6.200" height="4" fill="#a4a4a4"/><rect x="15.500" y="11.4" width="12.500" height="4" fill="#7a9ae0"/><rect x="0.5" y="16.6" width="6.200" height="4" fill="#a4a4a4"/><rect x="7.7" y="16.6" width="6.200" height="4" fill="#a4a4a4"/><rect x="15.500" y="16.6" width="12.500" height="4" fill="#6cb2f2"/></svg>
<svg style="left:1141px;top:59.5px;" width="14.5" height="15.4" viewBox="0 0 16 17"><path d="M0.500 13h14.500" stroke="#8a8a8a" stroke-width="2.400"/><path d="M0.500 15.800h14.500" stroke="#f0ae6a" stroke-width="1.100"/><path d="M1.500 8.500l5.500-7l5.500 7l-5.500 3z" fill="#6cb2f2" stroke="#dcdcdc" stroke-width="0.900"/><path d="M7 1.500v10" stroke="#2a4a7a" stroke-width="0.900"/></svg>
<span class="t" style="left:1151.5px;top:57.0px;font-size:7.5px;line-height:10px;color:#f0ae6a;">V</span>
<svg style="left:1141px;top:82.5px;" width="14.5" height="15.4" viewBox="0 0 16 17"><path d="M0.500 15.800h14.500" stroke="#f0ae6a" stroke-width="1.100"/><path d="M7 0.500l6 3v8l-6 3l-6-3v-8z" fill="#6cb2f2" stroke="#dcdcdc" stroke-width="0.900"/><path d="M1 3.500l6 3l6-3M7 6.500v8" stroke="#e8f0fa" stroke-width="0.900" fill="none"/><path d="M2 9h10" stroke="#2a4a7a" stroke-width="1"/></svg>
<span class="t" style="left:1151.5px;top:80.0px;font-size:7.5px;line-height:10px;color:#f0ae6a;">V</span>
<svg style="left:1141px;top:105px;" width="14.5" height="15.4" viewBox="0 0 16 17"><path d="M0.500 15.800h14.500" stroke="#f0ae6a" stroke-width="1.100"/><path d="M1 11l6-9.500l6 9.500c-3 2.500-9 2.500-12 0z" fill="#6cb2f2" stroke="#dcdcdc" stroke-width="0.900"/><path d="M7 1.500v11.500" stroke="#e8f0fa" stroke-width="0.900"/></svg>
<span class="t" style="left:1151.5px;top:102.5px;font-size:7.5px;line-height:10px;color:#6cb2f2;">S</span>
<svg style="left:1172px;top:59.5px;" width="26" height="24" viewBox="0 0 26 24"><defs><linearGradient id="cy" x1="0" y1="0" x2="1" y2="0"><stop offset="0" stop-color="#f6f6f6"/><stop offset="1" stop-color="#9a9a9a"/></linearGradient><radialGradient id="sp" cx="0.350" cy="0.300" r="0.800"><stop offset="0" stop-color="#d8d8d8"/><stop offset="1" stop-color="#6e6e6e"/></radialGradient></defs>
<path d="M0.500 3.500v12c0 3.500 13 3.500 13 0v-12z" fill="url(#cy)"/><ellipse cx="7" cy="3.500" rx="6.500" ry="3" fill="#fafafa"/><circle cx="18" cy="16" r="7.200" fill="url(#sp)"/></svg>
<div style="left:1px;top:153px;width:1557px;height:698px;background:#4c4c4c;"></div>
<div style="left:1px;top:153px;width:398px;height:582px;background:#5e5e5e;"></div>
<div style="left:1px;top:152.5px;width:398px;height:23px;background:#7c7c7c;"></div>
<span class="t" style="left:4px;top:157.3px;font-size:11px;line-height:14px;color:#c4c4c4;transform:scaleX(0.9627);">Свойства</span>
<div style="left:1px;top:175.5px;width:398px;height:25px;background:#5a5a5a;"></div>
<div style="left:396px;top:200.5px;width:2.2px;height:500px;background:#656565;"></div>
<div style="left:1.5px;top:176.5px;width:23.5px;height:23.5px;background:#4a6590;border:1px solid #5d8fd6;"></div>
<svg style="left:0px;top:176px;" width="214" height="25" viewBox="0 0 214 25"><path d="M6 9.800h7.500M9.800 6v7.500" stroke="#9cc8f4" stroke-width="1.200"/><path transform="translate(15 12.5) scale(0.95)" d="M0 0v7.200l1.800-1.600l1.300 2.900l1.200-0.600l-1.300-2.700h2.300z" fill="#f2f2f2"/><path transform="translate(32.5 8) scale(1.25)" d="M0 0v7.200l1.800-1.600l1.300 2.900l1.200-0.600l-1.300-2.700h2.300z" fill="#f2f2f2"/><path d="M50.500 5v14.500M148 5v14.500M199.700 5v14.500" stroke="#454545" stroke-width="1"/><rect x="57.500" y="4.700" width="13" height="13.500" fill="none" stroke="#dcdcdc" stroke-width="1" stroke-dasharray="2 1.300"/><path d="M57.500 11v7.200h9" stroke="#3a3a3a" stroke-width="1.200" fill="none"/><path transform="translate(68 12) scale(1)" d="M0 0v7.200l1.800-1.600l1.300 2.900l1.200-0.600l-1.300-2.700h2.300z" fill="#f2f2f2"/><rect x="79.500" y="4.700" width="13.500" height="13.500" fill="none" stroke="#cfcfcf" stroke-width="1" stroke-dasharray="1.500 1.300"/><rect x="83.500" y="8.500" width="6.500" height="6.500" fill="none" stroke="#cfcfcf" stroke-width="1" stroke-dasharray="1.500 1.300"/><path transform="translate(91 11.5) scale(1)" d="M0 0v7.200l1.800-1.600l1.300 2.900l1.200-0.600l-1.300-2.700h2.300z" fill="#f2f2f2"/><path d="M102 12.500l7.500-8.500v8.500z M102 14v6.500h7z M111.500 4h7.500v7.500z" fill="#6cb2f2"/><path transform="translate(112.5 12) scale(1.05)" d="M0 0v7.200l1.800-1.600l1.300 2.900l1.200-0.600l-1.300-2.700h2.300z" fill="#f2f2f2"/><path d="M126 4.500h13.500l-5.300 6v7l-2.800-1.500v-5.500z" fill="#6cb2f2"/><path d="M137 13l1.800 2.500h-1v2.500h-1.600v-2.500h-1z" fill="#c8b090"/><path d="M156 5v13M169 5v13" stroke="#6c6c6c" stroke-width="1" stroke-dasharray="1.500 2"/><path d="M161 6l1.500-1.500v6" stroke="#5f82ad" stroke-width="1.200" fill="none"/><path transform="translate(165.5 13) scale(1)" d="M0 0v7.200l1.800-1.600l1.300 2.900l1.200-0.600l-1.300-2.700h2.300z" fill="#9a9a9a"/><path d="M180 9.500l3.500 3.500l5.500-7" stroke="#5f82ad" stroke-width="1.800" fill="none"/><path transform="translate(188 13) scale(1)" d="M0 0v7.200l1.800-1.600l1.300 2.900l1.200-0.600l-1.300-2.700h2.300z" fill="#9a9a9a"/><rect x="207" y="5.500" width="7" height="13" fill="#6cb2f2"/></svg>
<div style="left:1px;top:221.5px;width:395px;height:1px;background:#545454;"></div>
<span class="t" style="left:8.3px;top:204.6px;font-size:10.5px;line-height:14px;color:#dedede;transform:scaleX(0.9561);">Объекты</span>
<span class="t" style="left:192.3px;top:204.6px;font-size:10.5px;line-height:14px;color:#8e8e8e;transform:scaleX(0.9594);">Нет набора</span>
<div style="left:1px;top:221.2px;width:395px;height:19.0px;background:#4a4a4a;"></div>
<span class="t" style="left:7.7px;top:224.0px;font-size:11px;line-height:14px;color:#f4f4f4;font-weight:bold;transform:scaleX(1.0690);">Общие</span>
<div style="left:378.1px;top:230.29999999999998px;width:7.1px;height:2px;background:#f0f0f0;"></div>
<div style="left:1px;top:259.5px;width:395px;height:1px;background:#545454;"></div>
<span class="t" style="left:8.3px;top:243.3px;font-size:10.5px;line-height:14px;color:#dedede;transform:scaleX(0.9125);">Слой</span>
<span class="t" style="left:276px;top:243.3px;font-size:10.5px;line-height:14px;color:#dedede;transform:scaleX(0.9418);">0</span>
<div style="left:1px;top:280.5px;width:395px;height:1px;background:#545454;"></div>
<span class="t" style="left:8.3px;top:263.7px;font-size:10.5px;line-height:14px;color:#dedede;transform:scaleX(0.9733);">Цвет</span>
<span class="t" style="left:207.5px;top:263.7px;font-size:10.5px;line-height:14px;color:#dedede;transform:scaleX(0.9515);">По слою</span>
<div style="left:1px;top:300.5px;width:395px;height:1px;background:#545454;"></div>
<span class="t" style="left:8.3px;top:284.2px;font-size:10.5px;line-height:14px;color:#dedede;transform:scaleX(0.9871);">Тип линий</span>
<span class="t" style="left:253.6px;top:284.2px;font-size:10.5px;line-height:14px;color:#dedede;transform:scaleX(0.9563);">По слою</span>
<div style="left:1px;top:321.5px;width:395px;height:1px;background:#545454;"></div>
<span class="t" style="left:8.3px;top:304.4px;font-size:10.5px;line-height:14px;color:#dedede;transform:scaleX(0.9739);">Масштаб типа линий</span>
<span class="t" style="left:192.3px;top:304.4px;font-size:10.5px;line-height:14px;color:#dedede;transform:scaleX(0.9247);">100</span>
<div style="left:1px;top:341.5px;width:395px;height:1px;background:#545454;"></div>
<span class="t" style="left:8.3px;top:324.6px;font-size:10.5px;line-height:14px;color:#dedede;transform:scaleX(0.9519);">Вес линий</span>
<span class="t" style="left:253.6px;top:324.6px;font-size:10.5px;line-height:14px;color:#dedede;transform:scaleX(0.9563);">По слою</span>
<div style="left:1px;top:361.5px;width:395px;height:1px;background:#545454;"></div>
<span class="t" style="left:8.3px;top:345.0px;font-size:10.5px;line-height:14px;color:#dedede;transform:scaleX(0.9748);">Прозрачность</span>
<span class="t" style="left:192.3px;top:345.0px;font-size:10.5px;line-height:14px;color:#dedede;transform:scaleX(0.9467);">По слою</span>
<div style="left:1px;top:382.5px;width:395px;height:1px;background:#545454;"></div>
<span class="t" style="left:8.3px;top:365.4px;font-size:10.5px;line-height:14px;color:#dedede;transform:scaleX(1.0052);">Толщина</span>
<span class="t" style="left:192.3px;top:365.4px;font-size:10.5px;line-height:14px;color:#dedede;transform:scaleX(0.8562);">0</span>
<div style="left:1px;top:381.9px;width:395px;height:18.900000000000034px;background:#4a4a4a;"></div>
<span class="t" style="left:7.7px;top:384.7px;font-size:11px;line-height:14px;color:#f4f4f4;font-weight:bold;transform:scaleX(1.0537);">3D-визуализация</span>
<div style="left:378.1px;top:390.95000000000005px;width:7.1px;height:2px;background:#f0f0f0;"></div>
<div style="left:1px;top:420.5px;width:395px;height:1px;background:#545454;"></div>
<span class="t" style="left:8.3px;top:404.2px;font-size:10.5px;line-height:14px;color:#dedede;transform:scaleX(0.9697);">Материал</span>
<span class="t" style="left:192.3px;top:404.2px;font-size:10.5px;line-height:14px;color:#dedede;transform:scaleX(0.9467);">По слою</span>
<div style="left:1px;top:420.8px;width:395px;height:19.099999999999966px;background:#4a4a4a;"></div>
<span class="t" style="left:7.7px;top:423.7px;font-size:11px;line-height:14px;color:#f4f4f4;font-weight:bold;transform:scaleX(0.9692);">Стили</span>
<div style="left:378.1px;top:429.95000000000005px;width:7.1px;height:2px;background:#f0f0f0;"></div>
<div style="left:1px;top:459.5px;width:395px;height:1px;background:#545454;"></div>
<span class="t" style="left:8.3px;top:443.3px;font-size:10.5px;line-height:14px;color:#dedede;transform:scaleX(0.9750);">Стиль текста</span>
<span class="t" style="left:192.3px;top:443.3px;font-size:10.5px;line-height:14px;color:#dedede;transform:scaleX(0.9661);">ГОСТ 2.304</span>
<div style="left:1px;top:479.5px;width:395px;height:1px;background:#545454;"></div>
<span class="t" style="left:8.3px;top:463.3px;font-size:10.5px;line-height:14px;color:#dedede;transform:scaleX(0.9610);">Размерный стиль</span>
<span class="t" style="left:192.3px;top:463.3px;font-size:10.5px;line-height:14px;color:#dedede;transform:scaleX(0.8885);">СПДС</span>
<div style="left:1px;top:480px;width:395px;height:19.30000000000001px;background:#4a4a4a;"></div>
<span class="t" style="left:7.7px;top:482.9px;font-size:11px;line-height:14px;color:#f4f4f4;font-weight:bold;transform:scaleX(1.0035);">Стиль печати</span>
<div style="left:378.1px;top:489.25px;width:7.1px;height:2px;background:#f0f0f0;"></div>
<div style="left:1px;top:519.5px;width:395px;height:1px;background:#545454;"></div>
<span class="t" style="left:8.3px;top:502.9px;font-size:10.5px;line-height:14px;color:#dedede;transform:scaleX(0.9908);">Стиль печати</span>
<span class="t" style="left:192.3px;top:502.9px;font-size:10.5px;line-height:14px;color:#8e8e8e;transform:scaleX(0.9598);">По цвету</span>
<div style="left:1px;top:539.5px;width:395px;height:1px;background:#545454;"></div>
<span class="t" style="left:8.3px;top:523.1px;font-size:10.5px;line-height:14px;color:#dedede;transform:scaleX(0.9948);">Таблица стилей печати</span>
<span class="t" style="left:192.3px;top:523.1px;font-size:10.5px;line-height:14px;color:#dedede;transform:scaleX(0.9059);">Нет</span>
<div style="left:1px;top:559.5px;width:395px;height:1px;background:#545454;"></div>
<span class="t" style="left:8.3px;top:543.2px;font-size:10.5px;line-height:14px;color:#dedede;transform:scaleX(0.9867);">Пространство таблицы стилей печ...</span>
<span class="t" style="left:192.3px;top:543.2px;font-size:10.5px;line-height:14px;color:#8e8e8e;transform:scaleX(0.9472);">Модель</span>
<div style="left:1px;top:580.5px;width:395px;height:1px;background:#545454;"></div>
<span class="t" style="left:8.3px;top:563.4px;font-size:10.5px;line-height:14px;color:#dedede;transform:scaleX(1.0019);">Тип стилей печати</span>
<span class="t" style="left:192.3px;top:563.4px;font-size:10.5px;line-height:14px;color:#8e8e8e;transform:scaleX(0.9446);">Недоступно</span>
<div style="left:1px;top:580.2px;width:395px;height:18.899999999999977px;background:#4a4a4a;"></div>
<span class="t" style="left:7.7px;top:583.0px;font-size:11px;line-height:14px;color:#f4f4f4;font-weight:bold;transform:scaleX(1.0497);">Разное</span>
<div style="left:378.1px;top:589.2500000000001px;width:7.1px;height:2px;background:#f0f0f0;"></div>
<div style="left:1px;top:619.5px;width:395px;height:1px;background:#545454;"></div>
<span class="t" style="left:8.3px;top:602.5px;font-size:10.5px;line-height:14px;color:#dedede;transform:scaleX(0.9363);">Знак ПСК Вкл</span>
<span class="t" style="left:192.3px;top:602.5px;font-size:10.5px;line-height:14px;color:#dedede;transform:scaleX(0.9420);">Да</span>
<div style="left:1px;top:639.5px;width:395px;height:1px;background:#545454;"></div>
<span class="t" style="left:8.3px;top:623.0px;font-size:10.5px;line-height:14px;color:#dedede;transform:scaleX(0.9743);">Знак ПСК в начале координат</span>
<span class="t" style="left:192.3px;top:623.0px;font-size:10.5px;line-height:14px;color:#dedede;transform:scaleX(0.9420);">Да</span>
<div style="left:1px;top:659.5px;width:395px;height:1px;background:#545454;"></div>
<span class="t" style="left:8.3px;top:643.3px;font-size:10.5px;line-height:14px;color:#dedede;transform:scaleX(0.9590);">ПСК в каждом ВЭкране</span>
<span class="t" style="left:192.3px;top:643.3px;font-size:10.5px;line-height:14px;color:#dedede;transform:scaleX(0.9420);">Да</span>
<div style="left:1px;top:680.5px;width:395px;height:1px;background:#545454;"></div>
<span class="t" style="left:8.3px;top:663.5px;font-size:10.5px;line-height:14px;color:#dedede;transform:scaleX(0.9123);">Имя ПСК</span>
<span class="t" style="left:192.3px;top:663.5px;font-size:10.5px;line-height:14px;color:#dedede;transform:scaleX(0.9550);">Мировая СК</span>
<div style="left:1px;top:700.5px;width:395px;height:1px;background:#545454;"></div>
<span class="t" style="left:8.3px;top:683.7px;font-size:10.5px;line-height:14px;color:#dedede;transform:scaleX(0.9656);">Визуальный стиль</span>
<span class="t" style="left:192.3px;top:683.7px;font-size:10.5px;line-height:14px;color:#dedede;transform:scaleX(0.9552);">Каркас</span>
<div style="left:188.5px;top:200.5px;width:1px;height:500px;background:#555555;"></div>
<div style="left:188.5px;top:221.2px;width:1px;height:19.0px;background:#4a4a4a;"></div>
<div style="left:188.5px;top:381.9px;width:1px;height:18.900000000000034px;background:#4a4a4a;"></div>
<div style="left:188.5px;top:420.8px;width:1px;height:19.099999999999966px;background:#4a4a4a;"></div>
<div style="left:188.5px;top:480px;width:1px;height:19.30000000000001px;background:#4a4a4a;"></div>
<div style="left:188.5px;top:580.2px;width:1px;height:18.899999999999977px;background:#4a4a4a;"></div>
<div style="left:193.5px;top:290.7px;width:58px;height:1px;background:#d8d8d8;"></div>
<div style="left:193.5px;top:331.1px;width:58px;height:1px;background:#d8d8d8;"></div>
<svg style="left:264px;top:245.5px;" width="9.5" height="9.5" viewBox="0 0 9.5 9.5"><rect width="9.5" height="9.5" fill="#0c0c0c"/><path d="M0.800 1v7.7h7.7z" fill="#fafafa"/></svg>
<svg style="left:193px;top:265.5px;" width="11.5" height="10.5" viewBox="0 0 11.5 10.5"><rect width="11.5" height="10.5" fill="#0c0c0c"/><path d="M0.800 1v8.7h9.7z" fill="#fafafa"/></svg>
<svg style="left:193px;top:242px;" width="70" height="17" viewBox="0 0 70 17"><path d="M6.800 1c3.500 0 5.500 2.500 5.500 5.200c0 2.600-2.200 3.700-2.700 6.300h-5.600c-0.500-2.600-2.700-3.700-2.700-6.300c0-2.700 2-5.200 5.500-5.200z" fill="#f4a85a"/><rect x="4.200" y="12.800" width="5.200" height="2.600" fill="#a8a8a8"/>
<g stroke="#6c6c6c" stroke-width="1.400"><path d="M24 3.500v10M19 8.500h10M20.500 5l7 7M27.500 5l-7 7"/></g>
<rect x="36" y="7.500" width="11" height="8.500" rx="1" fill="#6e6e6e"/><path d="M41 7.500v-2.500c0-3 5-3 5 0" stroke="#6e6e6e" stroke-width="1.500" fill="none"/>
<rect x="57" y="2.500" width="8" height="5" fill="#6e6e6e"/><rect x="54.500" y="7" width="13" height="7" rx="1" fill="#6e6e6e"/><rect x="57" y="12" width="8" height="3.500" fill="#747474"/></svg>
<div style="left:398.5px;top:153px;width:1158.5px;height:22.5px;background:#4c4c4c;"></div>
<div style="left:490px;top:154px;width:35.5px;height:21px;background:#686868;"></div>
<svg style="left:512px;top:162px;" width="8" height="8" viewBox="0 0 8 8"><path d="M0.800 0.800l6 6M6.800 0.800l-6 6" stroke="#bdbdbd" stroke-width="1.300"/></svg>
<svg style="left:1544px;top:163px;" width="10" height="6" viewBox="0 0 10 6"><path d="M0 0h9.600l-4.800 5.200z" fill="#f2f2f2"/></svg>
<div style="left:398.5px;top:175.8px;width:1159px;height:1.5px;background:#7e7e7e;"></div>
<div style="left:402px;top:177.3px;width:1155.5px;height:535px;background:#2a2a2a;"></div>
<div style="left:500px;top:181.7px;width:51.2px;height:15.5px;background:#434343;border-radius:3px;"></div>
<span class="t" style="left:507px;top:182.7px;font-size:10.5px;line-height:14px;color:#8a8a8a;transform:scaleX(1.0145);">Каркас</span>
<div style="left:553.2px;top:181.7px;width:150.5px;height:15.5px;background:#434343;border-radius:3px;"></div>
<span class="t" style="left:562.5px;top:182.7px;font-size:10.5px;line-height:14px;color:#858585;transform:scaleX(1.0195);">--- нет связанных видов ---</span>
<svg style="left:402px;top:177.300px;overflow:hidden" width="570" height="534.500" viewBox="0 0 570 534.500"><path d="M1.500 39.20H566.400M1.500 78.70H566.400M1.500 151.00H566.400M1.500 187.40H566.400M1.500 223.80H566.400M1.500 260.20H566.400M1.500 296.60H566.400M1.500 333.00H566.400M1.500 369.40H566.400M1.500 405.80H566.400M1.500 442.20H566.400M1.500 478.60H566.400M1.500 515.00H566.400M1.500 3.200H566.400M27.500 114.800H206.700M27.500 78.700V534.500M207.300 39.200V534.500M386.700 39.200V534.500M566.300 2.200V534.500" fill="none" stroke="#e2e2e2" stroke-width="1.350"/></svg>
<span class="t" style="left:611.2px;top:229.2px;font-size:11px;line-height:14px;color:#f6f6f6;transform:scaleX(1.0122);-webkit-text-stroke:0.350px #f6f6f6;">Допустимое значение отклонения</span>
<span class="t" style="left:852px;top:229.0px;font-size:11px;line-height:14px;color:#f6f6f6;transform:scaleX(1.0494);-webkit-text-stroke:0.350px #f6f6f6;">Результат</span>
<span class="t" style="left:502.5px;top:266.0px;font-size:11px;line-height:14px;color:#f6f6f6;transform:scaleX(1.0128);-webkit-text-stroke:0.350px #f6f6f6;">Крен, i</span>
<span class="t" style="left:505.7px;top:303.5px;font-size:11px;line-height:14px;color:#f6f6f6;transform:scaleX(0.9736);-webkit-text-stroke:0.350px #f6f6f6;">0.007</span>
<span class="t" style="left:685px;top:285.5px;font-size:11px;line-height:14px;color:#f6f6f6;transform:scaleX(0.9990);-webkit-text-stroke:0.350px #f6f6f6;">0.006</span>
<span class="t" style="left:810.5px;top:279.2px;font-size:11px;line-height:14px;color:#f6f6f6;transform:scaleX(1.0101);-webkit-text-stroke:0.350px #f6f6f6;">Превышение допустимого</span>
<span class="t" style="left:855px;top:292.5px;font-size:11px;line-height:14px;color:#f6f6f6;transform:scaleX(1.0102);-webkit-text-stroke:0.350px #f6f6f6;">значения</span>
<span class="t" style="left:505.7px;top:339.5px;font-size:11px;line-height:14px;color:#f6f6f6;transform:scaleX(0.9736);-webkit-text-stroke:0.350px #f6f6f6;">0.006</span>
<span class="t" style="left:685px;top:339.5px;font-size:11px;line-height:14px;color:#f6f6f6;transform:scaleX(0.9990);-webkit-text-stroke:0.350px #f6f6f6;">0.006</span>
<span class="t" style="left:815.5px;top:339.2px;font-size:11px;line-height:14px;color:#f6f6f6;transform:scaleX(1.0168);-webkit-text-stroke:0.350px #f6f6f6;">В допустимых пределах</span>
<span class="t" style="left:505.7px;top:375.9px;font-size:11px;line-height:14px;color:#f6f6f6;transform:scaleX(0.9736);-webkit-text-stroke:0.350px #f6f6f6;">0.006</span>
<span class="t" style="left:685px;top:375.9px;font-size:11px;line-height:14px;color:#f6f6f6;transform:scaleX(0.9990);-webkit-text-stroke:0.350px #f6f6f6;">0.006</span>
<span class="t" style="left:815.5px;top:375.6px;font-size:11px;line-height:14px;color:#f6f6f6;transform:scaleX(1.0168);-webkit-text-stroke:0.350px #f6f6f6;">В допустимых пределах</span>
<span class="t" style="left:505.7px;top:412.3px;font-size:11px;line-height:14px;color:#f6f6f6;transform:scaleX(0.9736);-webkit-text-stroke:0.350px #f6f6f6;">0.006</span>
<span class="t" style="left:685px;top:412.3px;font-size:11px;line-height:14px;color:#f6f6f6;transform:scaleX(0.9990);-webkit-text-stroke:0.350px #f6f6f6;">0.006</span>
<span class="t" style="left:815.5px;top:412.0px;font-size:11px;line-height:14px;color:#f6f6f6;transform:scaleX(1.0168);-webkit-text-stroke:0.350px #f6f6f6;">В допустимых пределах</span>
<span class="t" style="left:505.7px;top:448.7px;font-size:11px;line-height:14px;color:#f6f6f6;transform:scaleX(0.9736);-webkit-text-stroke:0.350px #f6f6f6;">0.007</span>
<span class="t" style="left:685px;top:448.7px;font-size:11px;line-height:14px;color:#f6f6f6;transform:scaleX(0.9990);-webkit-text-stroke:0.350px #f6f6f6;">0.006</span>
<span class="t" style="left:810.5px;top:442.2px;font-size:11px;line-height:14px;color:#f6f6f6;transform:scaleX(1.0101);-webkit-text-stroke:0.350px #f6f6f6;">Превышение допустимого</span>
<span class="t" style="left:855px;top:455.5px;font-size:11px;line-height:14px;color:#f6f6f6;transform:scaleX(1.0102);-webkit-text-stroke:0.350px #f6f6f6;">значения</span>
<span class="t" style="left:505.7px;top:485.1px;font-size:11px;line-height:14px;color:#f6f6f6;transform:scaleX(0.9736);-webkit-text-stroke:0.350px #f6f6f6;">0.006</span>
<span class="t" style="left:685px;top:485.1px;font-size:11px;line-height:14px;color:#f6f6f6;transform:scaleX(0.9990);-webkit-text-stroke:0.350px #f6f6f6;">0.006</span>
<span class="t" style="left:815.5px;top:484.8px;font-size:11px;line-height:14px;color:#f6f6f6;transform:scaleX(1.0168);-webkit-text-stroke:0.350px #f6f6f6;">В допустимых пределах</span>
<span class="t" style="left:505.7px;top:521.5px;font-size:11px;line-height:14px;color:#f6f6f6;transform:scaleX(0.9736);-webkit-text-stroke:0.350px #f6f6f6;">0.006</span>
<span class="t" style="left:685px;top:521.5px;font-size:11px;line-height:14px;color:#f6f6f6;transform:scaleX(0.9990);-webkit-text-stroke:0.350px #f6f6f6;">0.006</span>
<span class="t" style="left:815.5px;top:521.2px;font-size:11px;line-height:14px;color:#f6f6f6;transform:scaleX(1.0168);-webkit-text-stroke:0.350px #f6f6f6;">В допустимых пределах</span>
<span class="t" style="left:505.7px;top:557.9px;font-size:11px;line-height:14px;color:#f6f6f6;transform:scaleX(0.9736);-webkit-text-stroke:0.350px #f6f6f6;">0.006</span>
<span class="t" style="left:685px;top:557.9px;font-size:11px;line-height:14px;color:#f6f6f6;transform:scaleX(0.9990);-webkit-text-stroke:0.350px #f6f6f6;">0.006</span>
<span class="t" style="left:815.5px;top:557.6px;font-size:11px;line-height:14px;color:#f6f6f6;transform:scaleX(1.0168);-webkit-text-stroke:0.350px #f6f6f6;">В допустимых пределах</span>
<span class="t" style="left:505.7px;top:594.3px;font-size:11px;line-height:14px;color:#f6f6f6;transform:scaleX(0.9736);-webkit-text-stroke:0.350px #f6f6f6;">0.006</span>
<span class="t" style="left:685px;top:594.3px;font-size:11px;line-height:14px;color:#f6f6f6;transform:scaleX(0.9990);-webkit-text-stroke:0.350px #f6f6f6;">0.006</span>
<span class="t" style="left:815.5px;top:594.0px;font-size:11px;line-height:14px;color:#f6f6f6;transform:scaleX(1.0168);-webkit-text-stroke:0.350px #f6f6f6;">В допустимых пределах</span>
<span class="t" style="left:505.7px;top:630.7px;font-size:11px;line-height:14px;color:#f6f6f6;transform:scaleX(0.9736);-webkit-text-stroke:0.350px #f6f6f6;">0.007</span>
<span class="t" style="left:685px;top:630.7px;font-size:11px;line-height:14px;color:#f6f6f6;transform:scaleX(0.9990);-webkit-text-stroke:0.350px #f6f6f6;">0.006</span>
<span class="t" style="left:810.5px;top:624.2px;font-size:11px;line-height:14px;color:#f6f6f6;transform:scaleX(1.0101);-webkit-text-stroke:0.350px #f6f6f6;">Превышение допустимого</span>
<span class="t" style="left:855px;top:637.5px;font-size:11px;line-height:14px;color:#f6f6f6;transform:scaleX(1.0102);-webkit-text-stroke:0.350px #f6f6f6;">значения</span>
<span class="t" style="left:505.7px;top:667.1px;font-size:11px;line-height:14px;color:#f6f6f6;transform:scaleX(0.9736);-webkit-text-stroke:0.350px #f6f6f6;">0.006</span>
<span class="t" style="left:685px;top:667.1px;font-size:11px;line-height:14px;color:#f6f6f6;transform:scaleX(0.9990);-webkit-text-stroke:0.350px #f6f6f6;">0.006</span>
<span class="t" style="left:815.5px;top:666.8px;font-size:11px;line-height:14px;color:#f6f6f6;transform:scaleX(1.0168);-webkit-text-stroke:0.350px #f6f6f6;">В допустимых пределах</span>
<svg style="left:428px;top:578px;" width="112" height="112" viewBox="0 0 112 112"><path d="M4.500 4.500h9.500l-9.500 9.500h9.500" stroke="#e8e8e8" stroke-width="1.100" fill="none"/>
<path d="M9.100 24v72" stroke="#1c1ce6" stroke-width="1.500"/><path d="M9.100 24.500l-5 18.500h10z" stroke="#1c1ce6" stroke-width="1.300" fill="none"/>
<path d="M9.100 96v10" stroke="#20d020" stroke-width="1.500"/><path d="M2 100.800h15M5 96l4 4.500l4-4.500" stroke="#e8e8e8" stroke-width="1" fill="none"/>
<path d="M17 100.800h68" stroke="#d41a1a" stroke-width="1.500"/><path d="M85.500 100.800l-19-5.500v11z" stroke="#d41a1a" stroke-width="1.300" fill="none"/>
<path d="M96 97l10 9M106 97l-10 9" stroke="#e8e8e8" stroke-width="1.100"/></svg>
<svg style="left:1430px;top:185px;" width="120" height="130" viewBox="0 0 120 130"><g fill="none" stroke="#6a6a6a" stroke-width="1"><circle cx="59.600" cy="58.700" r="54.800"/><circle cx="59.600" cy="58.700" r="36.300"/><path d="M59.600 4v106.500M4.800 58.700h109.700"/></g><circle cx="59.600" cy="94.800" r="4.200" fill="#a97c55"/></svg>
<div style="left:1460px;top:295.2px;width:59.6px;height:15.8px;background:#4c4c4c;border-radius:3px;"></div>
<span class="t" style="left:1469.3px;top:296.4px;font-size:10.5px;line-height:14px;color:#a0a0a0;transform:scaleX(0.9659);">Спереди</span>
<svg style="left:1030px;top:177.5px;overflow:hidden" width="180" height="535" viewBox="0 1.500 180 535"><defs><filter id="f1" x="0" y="0" width="180" height="540" filterUnits="userSpaceOnUse" color-interpolation-filters="sRGB"><feTurbulence type="fractalNoise" baseFrequency="0.85" numOctaves="1" seed="3" result="n"/><feColorMatrix in="n" type="matrix" values="0 0 0 0 0  0 0 0 0 0  0 0 0 0 0  9 0 0 0 -3.9" result="m"/><feComposite in="SourceGraphic" in2="m" operator="in"/></filter><filter id="f2" x="0" y="0" width="180" height="540" filterUnits="userSpaceOnUse" color-interpolation-filters="sRGB"><feTurbulence type="fractalNoise" baseFrequency="0.9" numOctaves="1" seed="8" result="n"/><feColorMatrix in="n" type="matrix" values="0 0 0 0 0  0 0 0 0 0  0 0 0 0 0  9 0 0 0 -5.05" result="m"/><feComposite in="SourceGraphic" in2="m" operator="in"/></filter><filter id="f3" x="0" y="0" width="180" height="540" filterUnits="userSpaceOnUse" color-interpolation-filters="sRGB"><feTurbulence type="fractalNoise" baseFrequency="0.9" numOctaves="1" seed="15" result="n"/><feColorMatrix in="n" type="matrix" values="0 0 0 0 0  0 0 0 0 0  0 0 0 0 0  9 0 0 0 -5.6" result="m"/><feComposite in="SourceGraphic" in2="m" operator="in"/></filter><filter id="f4" x="0" y="0" width="180" height="540" filterUnits="userSpaceOnUse" color-interpolation-filters="sRGB"><feTurbulence type="fractalNoise" baseFrequency="0.7" numOctaves="1" seed="21" result="n"/><feColorMatrix in="n" type="matrix" values="0 0 0 0 0  0 0 0 0 0  0 0 0 0 0  9 0 0 0 -4.3" result="m"/><feComposite in="SourceGraphic" in2="m" operator="in"/></filter><filter id="bl" x="0" y="0" width="180" height="540" filterUnits="userSpaceOnUse"><feGaussianBlur stdDeviation="0.800"/></filter></defs><g filter="url(#bl)"><g fill="#3a3238" stroke="#3e363a" stroke-linecap="round" opacity="0.900"><g fill="#2b2628"><path d="M70.8 0H96.5L92.5 540H67.5Z"/></g><g fill="none"><path d="M48.0 0.0L39.0 180.0L33.0 269.0L28.5 354.0L16.5 537.0L13.0 584.0" stroke-width="4.400"/><path d="M118.0 0.0L121.0 64.0L125.5 180.0L133.4 354.0L140.8 537.0L142.5 584.0" stroke-width="4.400"/><path d="M99.5 0.0L102.0 274.0" stroke-width="3.8"/><path d="M102.0 274.0L105.0 544.0" stroke-width="3.8"/><path d="M110.0 60.0L112.0 544.0" stroke-width="1.8"/><path d="M40.1 118.6L125.1 118.6" stroke-width="4.6"/><path d="M33.7 229.0L129.7 229.0" stroke-width="4.6"/><path d="M27.2 341.5L134.8 341.5" stroke-width="4.6"/><path d="M20.1 452.3L139.4 452.3" stroke-width="4.6"/><path d="M49.0 12.0L71.0 67.0" stroke-width="3.8"/><path d="M71.0 74.0L47.0 115.0" stroke-width="3.8"/><path d="M110.0 64.0L122.0 116.0" stroke-width="3.8"/><path d="M96.0 24.0L112.0 60.0" stroke-width="3.8"/><path d="M48.0 121.0L69.0 156.0" stroke-width="3.8"/><path d="M83.0 142.0L40.0 226.0" stroke-width="3.8"/><path d="M123.0 121.0L109.0 180.0" stroke-width="3.8"/><path d="M118.0 174.0L101.0 206.0" stroke-width="3.8"/><path d="M109.0 204.0L130.0 228.0" stroke-width="3.8"/><path d="M38.0 233.0L96.0 334.0" stroke-width="3.8"/><path d="M70.0 294.0L32.0 340.0" stroke-width="3.8"/><path d="M122.0 232.0L92.0 273.0" stroke-width="3.8"/><path d="M105.0 244.0L132.0 340.0" stroke-width="3.8"/><path d="M32.0 344.0L67.5 381.4" stroke-width="3.8"/><path d="M90.7 359.0L27.4 446.8" stroke-width="3.8"/><path d="M129.7 354.0L105.5 438.4" stroke-width="3.8"/><path d="M92.8 406.7L130.8 446.8" stroke-width="3.8"/><path d="M25.0 456.0L84.4 538.0" stroke-width="3.8"/><path d="M69.6 516.4L44.0 540.0" stroke-width="3.8"/><path d="M137.0 456.0L90.7 499.6" stroke-width="3.8"/><path d="M107.6 465.8L132.0 540.0" stroke-width="3.8"/><path d="M22.0 56.0q3 6 12 5l16 2" stroke-width="5" fill="none"/><path d="M97.0 60.0h44" stroke-width="6" fill="none"/></g></g><g fill="#4e5c62" opacity="0.950"><rect x="19.5" y="-2" width="17.500" height="56" rx="3"/><rect x="104.5" y="-2" width="13.500" height="54" rx="3"/><rect x="123.0" y="-2" width="18.500" height="54" rx="3"/></g><g filter="url(#f1)" fill="#5b5657" stroke="#8f8a84" stroke-linecap="round"><path d="M70.8 0H96.5L92.5 540H67.5Z"/><g fill="none"><path d="M48.0 0.0L39.0 180.0L33.0 269.0L28.5 354.0L16.5 537.0L13.0 584.0" stroke-width="4.400"/><path d="M118.0 0.0L121.0 64.0L125.5 180.0L133.4 354.0L140.8 537.0L142.5 584.0" stroke-width="4.400"/><path d="M99.5 0.0L102.0 274.0" stroke-width="3.8"/><path d="M102.0 274.0L105.0 544.0" stroke-width="3.8"/><path d="M110.0 60.0L112.0 544.0" stroke-width="1.8"/><path d="M40.1 118.6L125.1 118.6" stroke-width="4.6"/><path d="M33.7 229.0L129.7 229.0" stroke-width="4.6"/><path d="M27.2 341.5L134.8 341.5" stroke-width="4.6"/><path d="M20.1 452.3L139.4 452.3" stroke-width="4.6"/><path d="M49.0 12.0L71.0 67.0" stroke-width="3.8"/><path d="M71.0 74.0L47.0 115.0" stroke-width="3.8"/><path d="M110.0 64.0L122.0 116.0" stroke-width="3.8"/><path d="M96.0 24.0L112.0 60.0" stroke-width="3.8"/><path d="M48.0 121.0L69.0 156.0" stroke-width="3.8"/><path d="M83.0 142.0L40.0 226.0" stroke-width="3.8"/><path d="M123.0 121.0L109.0 180.0" stroke-width="3.8"/><path d="M118.0 174.0L101.0 206.0" stroke-width="3.8"/><path d="M109.0 204.0L130.0 228.0" stroke-width="3.8"/><path d="M38.0 233.0L96.0 334.0" stroke-width="3.8"/><path d="M70.0 294.0L32.0 340.0" stroke-width="3.8"/><path d="M122.0 232.0L92.0 273.0" stroke-width="3.8"/><path d="M105.0 244.0L132.0 340.0" stroke-width="3.8"/><path d="M32.0 344.0L67.5 381.4" stroke-width="3.8"/><path d="M90.7 359.0L27.4 446.8" stroke-width="3.8"/><path d="M129.7 354.0L105.5 438.4" stroke-width="3.8"/><path d="M92.8 406.7L130.8 446.8" stroke-width="3.8"/><path d="M25.0 456.0L84.4 538.0" stroke-width="3.8"/><path d="M69.6 516.4L44.0 540.0" stroke-width="3.8"/><path d="M137.0 456.0L90.7 499.6" stroke-width="3.8"/><path d="M107.6 465.8L132.0 540.0" stroke-width="3.8"/><path d="M22.0 56.0q3 6 12 5l16 2" stroke-width="5" fill="none"/><path d="M97.0 60.0h44" stroke-width="6" fill="none"/></g><g fill="#70858c" stroke="none"><rect x="19.5" y="-2" width="17.500" height="56" rx="3"/><rect x="104.5" y="-2" width="13.500" height="54" rx="3"/><rect x="123.0" y="-2" width="18.500" height="54" rx="3"/></g></g><g filter="url(#f2)" fill="#958d80" stroke="#d6cfc0" stroke-linecap="round"><path d="M70.8 0H96.5L92.5 540H67.5Z"/><g fill="none"><path d="M48.0 0.0L39.0 180.0L33.0 269.0L28.5 354.0L16.5 537.0L13.0 584.0" stroke-width="4.400"/><path d="M118.0 0.0L121.0 64.0L125.5 180.0L133.4 354.0L140.8 537.0L142.5 584.0" stroke-width="4.400"/><path d="M99.5 0.0L102.0 274.0" stroke-width="3.8"/><path d="M102.0 274.0L105.0 544.0" stroke-width="3.8"/><path d="M110.0 60.0L112.0 544.0" stroke-width="1.8"/><path d="M40.1 118.6L125.1 118.6" stroke-width="4.6"/><path d="M33.7 229.0L129.7 229.0" stroke-width="4.6"/><path d="M27.2 341.5L134.8 341.5" stroke-width="4.6"/><path d="M20.1 452.3L139.4 452.3" stroke-width="4.6"/><path d="M49.0 12.0L71.0 67.0" stroke-width="3.8"/><path d="M71.0 74.0L47.0 115.0" stroke-width="3.8"/><path d="M110.0 64.0L122.0 116.0" stroke-width="3.8"/><path d="M96.0 24.0L112.0 60.0" stroke-width="3.8"/><path d="M48.0 121.0L69.0 156.0" stroke-width="3.8"/><path d="M83.0 142.0L40.0 226.0" stroke-width="3.8"/><path d="M123.0 121.0L109.0 180.0" stroke-width="3.8"/><path d="M118.0 174.0L101.0 206.0" stroke-width="3.8"/><path d="M109.0 204.0L130.0 228.0" stroke-width="3.8"/><path d="M38.0 233.0L96.0 334.0" stroke-width="3.8"/><path d="M70.0 294.0L32.0 340.0" stroke-width="3.8"/><path d="M122.0 232.0L92.0 273.0" stroke-width="3.8"/><path d="M105.0 244.0L132.0 340.0" stroke-width="3.8"/><path d="M32.0 344.0L67.5 381.4" stroke-width="3.8"/><path d="M90.7 359.0L27.4 446.8" stroke-width="3.8"/><path d="M129.7 354.0L105.5 438.4" stroke-width="3.8"/><path d="M92.8 406.7L130.8 446.8" stroke-width="3.8"/><path d="M25.0 456.0L84.4 538.0" stroke-width="3.8"/><path d="M69.6 516.4L44.0 540.0" stroke-width="3.8"/><path d="M137.0 456.0L90.7 499.6" stroke-width="3.8"/><path d="M107.6 465.8L132.0 540.0" stroke-width="3.8"/><path d="M22.0 56.0q3 6 12 5l16 2" stroke-width="5" fill="none"/><path d="M97.0 60.0h44" stroke-width="6" fill="none"/></g><g fill="#9cb0b6" stroke="none"><rect x="19.5" y="-2" width="17.500" height="56" rx="3"/><rect x="104.5" y="-2" width="13.500" height="54" rx="3"/><rect x="123.0" y="-2" width="18.500" height="54" rx="3"/></g></g><g filter="url(#f3)" fill="#58709a" stroke="#7f9fc6" stroke-linecap="round"><path d="M70.8 0H96.5L92.5 540H67.5Z"/><g fill="none"><path d="M48.0 0.0L39.0 180.0L33.0 269.0L28.5 354.0L16.5 537.0L13.0 584.0" stroke-width="4.400"/><path d="M118.0 0.0L121.0 64.0L125.5 180.0L133.4 354.0L140.8 537.0L142.5 584.0" stroke-width="4.400"/><path d="M99.5 0.0L102.0 274.0" stroke-width="3.8"/><path d="M102.0 274.0L105.0 544.0" stroke-width="3.8"/><path d="M110.0 60.0L112.0 544.0" stroke-width="1.8"/><path d="M40.1 118.6L125.1 118.6" stroke-width="4.6"/><path d="M33.7 229.0L129.7 229.0" stroke-width="4.6"/><path d="M27.2 341.5L134.8 341.5" stroke-width="4.6"/><path d="M20.1 452.3L139.4 452.3" stroke-width="4.6"/><path d="M49.0 12.0L71.0 67.0" stroke-width="3.8"/><path d="M71.0 74.0L47.0 115.0" stroke-width="3.8"/><path d="M110.0 64.0L122.0 116.0" stroke-width="3.8"/><path d="M96.0 24.0L112.0 60.0" stroke-width="3.8"/><path d="M48.0 121.0L69.0 156.0" stroke-width="3.8"/><path d="M83.0 142.0L40.0 226.0" stroke-width="3.8"/><path d="M123.0 121.0L109.0 180.0" stroke-width="3.8"/><path d="M118.0 174.0L101.0 206.0" stroke-width="3.8"/><path d="M109.0 204.0L130.0 228.0" stroke-width="3.8"/><path d="M38.0 233.0L96.0 334.0" stroke-width="3.8"/><path d="M70.0 294.0L32.0 340.0" stroke-width="3.8"/><path d="M122.0 232.0L92.0 273.0" stroke-width="3.8"/><path d="M105.0 244.0L132.0 340.0" stroke-width="3.8"/><path d="M32.0 344.0L67.5 381.4" stroke-width="3.8"/><path d="M90.7 359.0L27.4 446.8" stroke-width="3.8"/><path d="M129.7 354.0L105.5 438.4" stroke-width="3.8"/><path d="M92.8 406.7L130.8 446.8" stroke-width="3.8"/><path d="M25.0 456.0L84.4 538.0" stroke-width="3.8"/><path d="M69.6 516.4L44.0 540.0" stroke-width="3.8"/><path d="M137.0 456.0L90.7 499.6" stroke-width="3.8"/><path d="M107.6 465.8L132.0 540.0" stroke-width="3.8"/></g></g><g filter="url(#f4)" fill="#221a20" stroke="#2a2228" stroke-linecap="round"><path d="M70.8 0H96.5L92.5 540H67.5Z"/><g fill="none"><path d="M48.0 0.0L39.0 180.0L33.0 269.0L28.5 354.0L16.5 537.0L13.0 584.0" stroke-width="4.400"/><path d="M118.0 0.0L121.0 64.0L125.5 180.0L133.4 354.0L140.8 537.0L142.5 584.0" stroke-width="4.400"/><path d="M99.5 0.0L102.0 274.0" stroke-width="3.8"/><path d="M102.0 274.0L105.0 544.0" stroke-width="3.8"/><path d="M110.0 60.0L112.0 544.0" stroke-width="1.8"/><path d="M40.1 118.6L125.1 118.6" stroke-width="4.6"/><path d="M33.7 229.0L129.7 229.0" stroke-width="4.6"/><path d="M27.2 341.5L134.8 341.5" stroke-width="4.6"/><path d="M20.1 452.3L139.4 452.3" stroke-width="4.6"/><path d="M49.0 12.0L71.0 67.0" stroke-width="3.8"/><path d="M71.0 74.0L47.0 115.0" stroke-width="3.8"/><path d="M110.0 64.0L122.0 116.0" stroke-width="3.8"/><path d="M96.0 24.0L112.0 60.0" stroke-width="3.8"/><path d="M48.0 121.0L69.0 156.0" stroke-width="3.8"/><path d="M83.0 142.0L40.0 226.0" stroke-width="3.8"/><path d="M123.0 121.0L109.0 180.0" stroke-width="3.8"/><path d="M118.0 174.0L101.0 206.0" stroke-width="3.8"/><path d="M109.0 204.0L130.0 228.0" stroke-width="3.8"/><path d="M38.0 233.0L96.0 334.0" stroke-width="3.8"/><path d="M70.0 294.0L32.0 340.0" stroke-width="3.8"/><path d="M122.0 232.0L92.0 273.0" stroke-width="3.8"/><path d="M105.0 244.0L132.0 340.0" stroke-width="3.8"/><path d="M32.0 344.0L67.5 381.4" stroke-width="3.8"/><path d="M90.7 359.0L27.4 446.8" stroke-width="3.8"/><path d="M129.7 354.0L105.5 438.4" stroke-width="3.8"/><path d="M92.8 406.7L130.8 446.8" stroke-width="3.8"/><path d="M25.0 456.0L84.4 538.0" stroke-width="3.8"/><path d="M69.6 516.4L44.0 540.0" stroke-width="3.8"/><path d="M137.0 456.0L90.7 499.6" stroke-width="3.8"/><path d="M107.6 465.8L132.0 540.0" stroke-width="3.8"/></g><g fill="#2c3438" stroke="none"><rect x="19.5" y="-2" width="17.500" height="56" rx="3"/><rect x="104.5" y="-2" width="13.500" height="54" rx="3"/><rect x="123.0" y="-2" width="18.500" height="54" rx="3"/></g></g><g fill="#2a2a2e" opacity="0.550"><rect x="26.0" y="-2" width="3.500" height="52"/><rect x="118.0" y="-2" width="5" height="54"/><rect x="130.0" y="-2" width="3" height="50"/></g></g><g opacity="0.900"><g filter="url(#f2)" fill="#958d80" stroke="#e8e1d2" stroke-linecap="round"><path d="M70.8 0H96.5L92.5 540H67.5Z"/><g fill="none"><path d="M48.0 0.0L39.0 180.0L33.0 269.0L28.5 354.0L16.5 537.0L13.0 584.0" stroke-width="4.400"/><path d="M118.0 0.0L121.0 64.0L125.5 180.0L133.4 354.0L140.8 537.0L142.5 584.0" stroke-width="4.400"/><path d="M99.5 0.0L102.0 274.0" stroke-width="3.8"/><path d="M102.0 274.0L105.0 544.0" stroke-width="3.8"/><path d="M110.0 60.0L112.0 544.0" stroke-width="1.8"/><path d="M40.1 118.6L125.1 118.6" stroke-width="4.6"/><path d="M33.7 229.0L129.7 229.0" stroke-width="4.6"/><path d="M27.2 341.5L134.8 341.5" stroke-width="4.6"/><path d="M20.1 452.3L139.4 452.3" stroke-width="4.6"/><path d="M49.0 12.0L71.0 67.0" stroke-width="3.8"/><path d="M71.0 74.0L47.0 115.0" stroke-width="3.8"/><path d="M110.0 64.0L122.0 116.0" stroke-width="3.8"/><path d="M96.0 24.0L112.0 60.0" stroke-width="3.8"/><path d="M48.0 121.0L69.0 156.0" stroke-width="3.8"/><path d="M83.0 142.0L40.0 226.0" stroke-width="3.8"/><path d="M123.0 121.0L109.0 180.0" stroke-width="3.8"/><path d="M118.0 174.0L101.0 206.0" stroke-width="3.8"/><path d="M109.0 204.0L130.0 228.0" stroke-width="3.8"/><path d="M38.0 233.0L96.0 334.0" stroke-width="3.8"/><path d="M70.0 294.0L32.0 340.0" stroke-width="3.8"/><path d="M122.0 232.0L92.0 273.0" stroke-width="3.8"/><path d="M105.0 244.0L132.0 340.0" stroke-width="3.8"/><path d="M32.0 344.0L67.5 381.4" stroke-width="3.8"/><path d="M90.7 359.0L27.4 446.8" stroke-width="3.8"/><path d="M129.7 354.0L105.5 438.4" stroke-width="3.8"/><path d="M92.8 406.7L130.8 446.8" stroke-width="3.8"/><path d="M25.0 456.0L84.4 538.0" stroke-width="3.8"/><path d="M69.6 516.4L44.0 540.0" stroke-width="3.8"/><path d="M137.0 456.0L90.7 499.6" stroke-width="3.8"/><path d="M107.6 465.8L132.0 540.0" stroke-width="3.8"/><path d="M22.0 56.0q3 6 12 5l16 2" stroke-width="5" fill="none"/><path d="M97.0 60.0h44" stroke-width="6" fill="none"/></g><g fill="#9cb0b6" stroke="none"><rect x="19.5" y="-2" width="17.500" height="56" rx="3"/><rect x="104.5" y="-2" width="13.500" height="54" rx="3"/><rect x="123.0" y="-2" width="18.500" height="54" rx="3"/></g></g></g><g opacity="0.600"><g filter="url(#f4)" fill="#221a20" stroke="#2a2228" stroke-linecap="round"><path d="M70.8 0H96.5L92.5 540H67.5Z"/><g fill="none"><path d="M48.0 0.0L39.0 180.0L33.0 269.0L28.5 354.0L16.5 537.0L13.0 584.0" stroke-width="4.400"/><path d="M118.0 0.0L121.0 64.0L125.5 180.0L133.4 354.0L140.8 537.0L142.5 584.0" stroke-width="4.400"/><path d="M99.5 0.0L102.0 274.0" stroke-width="3.8"/><path d="M102.0 274.0L105.0 544.0" stroke-width="3.8"/><path d="M110.0 60.0L112.0 544.0" stroke-width="1.8"/><path d="M40.1 118.6L125.1 118.6" stroke-width="4.6"/><path d="M33.7 229.0L129.7 229.0" stroke-width="4.6"/><path d="M27.2 341.5L134.8 341.5" stroke-width="4.6"/><path d="M20.1 452.3L139.4 452.3" stroke-width="4.6"/><path d="M49.0 12.0L71.0 67.0" stroke-width="3.8"/><path d="M71.0 74.0L47.0 115.0" stroke-width="3.8"/><path d="M110.0 64.0L122.0 116.0" stroke-width="3.8"/><path d="M96.0 24.0L112.0 60.0" stroke-width="3.8"/><path d="M48.0 121.0L69.0 156.0" stroke-width="3.8"/><path d="M83.0 142.0L40.0 226.0" stroke-width="3.8"/><path d="M123.0 121.0L109.0 180.0" stroke-width="3.8"/><path d="M118.0 174.0L101.0 206.0" stroke-width="3.8"/><path d="M109.0 204.0L130.0 228.0" stroke-width="3.8"/><path d="M38.0 233.0L96.0 334.0" stroke-width="3.8"/><path d="M70.0 294.0L32.0 340.0" stroke-width="3.8"/><path d="M122.0 232.0L92.0 273.0" stroke-width="3.8"/><path d="M105.0 244.0L132.0 340.0" stroke-width="3.8"/><path d="M32.0 344.0L67.5 381.4" stroke-width="3.8"/><path d="M90.7 359.0L27.4 446.8" stroke-width="3.8"/><path d="M129.7 354.0L105.5 438.4" stroke-width="3.8"/><path d="M92.8 406.7L130.8 446.8" stroke-width="3.8"/><path d="M25.0 456.0L84.4 538.0" stroke-width="3.8"/><path d="M69.6 516.4L44.0 540.0" stroke-width="3.8"/><path d="M137.0 456.0L90.7 499.6" stroke-width="3.8"/><path d="M107.6 465.8L132.0 540.0" stroke-width="3.8"/></g><g fill="#2c3438" stroke="none"><rect x="19.5" y="-2" width="17.500" height="56" rx="3"/><rect x="104.5" y="-2" width="13.500" height="54" rx="3"/><rect x="123.0" y="-2" width="18.500" height="54" rx="3"/></g></g></g><path d="M41.7 102.7H138.6" stroke="#1414c4" stroke-width="1.600"/><path d="M36.0 194.5H145.3" stroke="#1414c4" stroke-width="1.600"/><path d="M29.5 291.5H149.2" stroke="#1414c4" stroke-width="1.600"/><path d="M23.0 389.0H154.6" stroke="#1414c4" stroke-width="1.600"/><path d="M17.7 484.8H160.0" stroke="#1414c4" stroke-width="1.600"/></svg>
<div style="left:402px;top:713.8px;width:1155.5px;height:18px;background:#4c4c4c;"></div>
<div style="left:402px;top:711.8px;width:1155.5px;height:2px;background:#7e7e7e;"></div>
<div style="left:402px;top:731.6px;width:1155.5px;height:2.4px;background:#7c7c7c;"></div>
<div style="left:402px;top:177.3px;width:2px;height:556.7px;background:#7c7c7c;"></div>
<div style="left:1556px;top:177.3px;width:1.8px;height:556.7px;background:#848484;"></div>
<svg style="left:407px;top:715.8px;" width="14" height="13" viewBox="0 0 14 13"><rect x="0.500" y="0.500" width="12.500" height="11.500" fill="#3a3a3a" stroke="#d0d0d0" stroke-width="1"/><rect x="1" y="3.200" width="11.500" height="3" fill="#6ea8e6"/><path d="M1 8.500h11.500" stroke="#d0d0d0" stroke-width="1"/></svg>
<div style="left:440px;top:713.3px;width:51.8px;height:17.2px;background:#747474;"></div>
<span class="t" style="left:446.5px;top:715.3px;font-size:11px;line-height:14px;color:#f0f0f0;transform:scaleX(1.0105);">Модель</span>
<div style="left:492.2px;top:713.5px;width:22.19999999999999px;height:17px;background:#484848;border:1px solid #666;"></div>
<span class="t" style="left:498.4px;top:715.3px;font-size:11px;line-height:14px;color:#a4a4a4;transform:scaleX(0.9216);">A4</span>
<div style="left:515.8px;top:713.5px;width:22.100000000000023px;height:17px;background:#484848;border:1px solid #666;"></div>
<span class="t" style="left:522px;top:715.3px;font-size:11px;line-height:14px;color:#a4a4a4;transform:scaleX(0.9439);">A3</span>
<div style="left:539.1px;top:713.5px;width:22.199999999999932px;height:17px;background:#484848;border:1px solid #666;"></div>
<span class="t" style="left:545px;top:715.3px;font-size:11px;line-height:14px;color:#a4a4a4;transform:scaleX(0.9885);">A2</span>
<div style="left:562.7px;top:713.5px;width:22.09999999999991px;height:17px;background:#484848;border:1px solid #666;"></div>
<span class="t" style="left:568.7px;top:715.3px;font-size:11px;line-height:14px;color:#a4a4a4;transform:scaleX(0.9141);">A1</span>
<div style="left:1px;top:737.5px;width:1557px;height:113.5px;background:#5e5e5e;"></div>
<div style="left:1px;top:737.5px;width:20.5px;height:113.5px;background:#6c6c6c;"></div>
<div style="left:21.5px;top:833px;width:1536px;height:1.5px;background:#555555;"></div>
<div style="left:21.5px;top:834.8px;width:1536px;height:1.2px;background:#676767;"></div>
<svg style="left:4.5px;top:743.5px;" width="8" height="8" viewBox="0 0 8 8"><path d="M0.500 0.500l7 7M7.500 0.500l-7 7" stroke="#f2f2f2" stroke-width="1.400"/></svg>
<svg style="left:5.6px;top:760.6px;" width="6" height="7.5" viewBox="0 0 8 9"><path d="M2 0.500h3.500v3.500h1.500v1.200h-6.500v-1.200h1.500z M3.700 5v3.500" stroke="#f2f2f2" stroke-width="1" fill="#f2f2f2"/></svg>
<div style="left:1.300px;top:770.500px;width:20px;height:80px;overflow:hidden;"><span class="t" style="left:1.600px;top:78.300px;font-size:10px;line-height:12px;color:#d6d6d6;transform-origin:0 0;transform:rotate(-90deg) scaleX(1.095);">Командная строка</span></div>
<div style="left:21.500px;top:739.300px;width:700px;height:8px;overflow:hidden;"><span class="t dm" style="left:3px;top:-7.100px;font-size:10.700px;line-height:14px;color:#ececec;transform:scaleX(1.0037);">Укажите противоположный угол:</span></div>
<span class="t dm" style="left:24.5px;top:746.7px;font-size:10.7px;line-height:14px;color:#ececec;transform:scaleX(0.9993);">*Отмена*</span>
<span class="t dm" style="left:24.5px;top:761.2px;font-size:10.7px;line-height:14px;color:#ececec;transform:scaleX(1.0037);">Укажите противоположный угол:</span>
<span class="t dm" style="left:24.5px;top:775.5px;font-size:10.7px;line-height:14px;color:#ececec;transform:scaleX(1.0066);">M,MOVE,П,ПЕРЕНЕСТИ - Перемещение</span>
<span class="t dm" style="left:24.5px;top:790.0px;font-size:10.7px;line-height:14px;color:#ececec;transform:scaleX(1.0039);">1 найдено</span>
<span class="t dm" style="left:24.5px;top:804.7px;font-size:10.7px;line-height:14px;color:#ececec;transform:scaleX(1.0048);">Базовая точка или [Перемещение] &lt;Перемещение&gt; :</span>
<span class="t dm" style="left:24.5px;top:819.2px;font-size:10.7px;line-height:14px;color:#ececec;transform:scaleX(1.0040);">Укажите вторую точку или &lt;считать перемещением первую точку&gt;:</span>
<span class="t dm" style="left:24px;top:836.7px;font-size:10.7px;line-height:14px;color:#ececec;transform:scaleX(0.9799);">Команда:</span>
<div style="left:1px;top:734.500px;width:1557px;height:5.300px;background:linear-gradient(#424242,#5c5c5c);"></div>
<div style="left:1px;top:739.5px;width:20.5px;height:1px;background:#666666;"></div>
<div style="left:1px;top:851px;width:1557px;height:23px;background:#4c4c4c;"></div>
<div style="left:0px;top:874px;width:331px;height:3px;background:#dfe3e8;"></div>
<div style="left:331px;top:874px;width:860px;height:3px;background:#0d1f58;"></div>
<div style="left:1191px;top:874px;width:369px;height:3px;background:#9ec2e2;"></div>
<span class="t" style="left:3px;top:856.0px;font-size:11.5px;line-height:15px;color:#d6d6d6;transform:scaleX(0.9442);">3.3828,6.0390,2</span>
<div style="left:86px;top:853.5px;width:1px;height:19px;background:#5e5e5e;"></div>
<div style="left:249px;top:853.5px;width:1px;height:19px;background:#5e5e5e;"></div>
<div style="left:662.3px;top:853.5px;width:1px;height:19px;background:#5e5e5e;"></div>
<div style="left:938.6px;top:853.5px;width:1px;height:19px;background:#5e5e5e;"></div>
<div style="left:961.2px;top:853.5px;width:1px;height:19px;background:#5e5e5e;"></div>
<div style="left:1101.9px;top:853.5px;width:1px;height:19px;background:#5e5e5e;"></div>
<div style="left:1124.9px;top:853.5px;width:1px;height:19px;background:#5e5e5e;"></div>
<div style="left:1327.4px;top:853.5px;width:1px;height:19px;background:#5e5e5e;"></div>
<div style="left:1354px;top:853.5px;width:1px;height:19px;background:#5e5e5e;"></div>
<div style="left:1381px;top:853.5px;width:1px;height:19px;background:#5e5e5e;"></div>
<div style="left:1407.7px;top:853.5px;width:1px;height:19px;background:#5e5e5e;"></div>
<div style="left:1434.2px;top:853.5px;width:1px;height:19px;background:#5e5e5e;"></div>
<div style="left:1461.2px;top:853.5px;width:1px;height:19px;background:#5e5e5e;"></div>
<div style="left:1487.3px;top:853.5px;width:1px;height:19px;background:#5e5e5e;"></div>
<div style="left:1510.4px;top:853.5px;width:1px;height:19px;background:#5e5e5e;"></div>
<div style="left:1534.6px;top:853.5px;width:1px;height:19px;background:#5e5e5e;"></div>
<div style="left:124.5px;top:852.5px;width:47.5px;height:21px;background:#4c6a92;border:1px solid #6f9ad4;"></div>
<div style="left:343.6px;top:852.5px;width:83.69999999999999px;height:21px;background:#4c6a92;border:1px solid #6f9ad4;"></div>
<div style="left:426.7px;top:852.5px;width:79.0px;height:21px;background:#4c6a92;border:1px solid #6f9ad4;"></div>
<div style="left:550.5px;top:852.5px;width:73.89999999999998px;height:21px;background:#4c6a92;border:1px solid #6f9ad4;"></div>
<div style="left:666px;top:852.5px;width:34px;height:21px;background:#4c6a92;border:1px solid #6f9ad4;"></div>
<div style="left:699.4px;top:852.5px;width:81.60000000000002px;height:21px;background:#4c6a92;border:1px solid #6f9ad4;"></div>
<div style="left:1147px;top:852.5px;width:28.200000000000045px;height:21px;background:#4c6a92;border:1px solid #6f9ad4;"></div>
<div style="left:1174.6px;top:852.5px;width:26.600000000000136px;height:21px;background:#4c6a92;border:1px solid #6f9ad4;"></div>
<div style="left:1227.2px;top:852.5px;width:27.799999999999955px;height:21px;background:#4c6a92;border:1px solid #6f9ad4;"></div>
<span class="t" style="left:94.5px;top:856.0px;font-size:11.5px;line-height:15px;color:#d6d6d6;transform:scaleX(0.8798);">ШАГ</span>
<span class="t" style="left:132.5px;top:856.0px;font-size:11.5px;line-height:15px;color:#f0f0f0;transform:scaleX(0.8697);">СЕТКА</span>
<span class="t" style="left:179.5px;top:856.0px;font-size:11.5px;line-height:15px;color:#d6d6d6;transform:scaleX(0.9258);">оПРИВЯЗКА</span>
<span class="t" style="left:257px;top:856.0px;font-size:11.5px;line-height:15px;color:#d6d6d6;transform:scaleX(0.9367);">3D оПРИВЯЗКА</span>
<span class="t" style="left:351.7px;top:856.0px;font-size:11.5px;line-height:15px;color:#f0f0f0;transform:scaleX(0.9115);">ОТС-ОБЪЕКТ</span>
<span class="t" style="left:434.5px;top:856.0px;font-size:11.5px;line-height:15px;color:#f0f0f0;transform:scaleX(0.9344);">ОТС-ПОЛЯР</span>
<span class="t" style="left:513.8px;top:856.0px;font-size:11.5px;line-height:15px;color:#d6d6d6;transform:scaleX(0.9350);">ОРТО</span>
<span class="t" style="left:558px;top:856.0px;font-size:11.5px;line-height:15px;color:#f0f0f0;transform:scaleX(0.9861);">ДИН-ВВОД</span>
<span class="t" style="left:632.2px;top:856.0px;font-size:11.5px;line-height:15px;color:#d6d6d6;transform:scaleX(0.9406);">ИЗО</span>
<span class="t" style="left:673.5px;top:856.0px;font-size:11.5px;line-height:15px;color:#f0f0f0;transform:scaleX(0.7612);">ВЕС</span>
<span class="t" style="left:707.5px;top:856.0px;font-size:11.5px;line-height:15px;color:#f0f0f0;transform:scaleX(0.9195);">ШТРИХОВКА</span>
<span class="t" style="left:890.4px;top:856.0px;font-size:11.5px;line-height:15px;color:#d6d6d6;transform:scaleX(0.9503);">МОДЕЛЬ</span>
<span class="t" style="left:1271.5px;top:854.0px;font-size:11.5px;line-height:15px;color:#d6d6d6;transform:scaleX(0.9776);">m1:100</span>
<svg style="left:942px;top:855px;" width="16" height="16" viewBox="0 0 16 16"><rect x="1" y="8" width="7" height="6" rx="1" fill="none" stroke="#e0e0e0" stroke-width="1.300"/><path d="M2.500 8v-1.500c0-2.500 4-2.500 4 0" stroke="#e0e0e0" stroke-width="1.200" fill="none"/><rect x="8" y="4.500" width="6.500" height="5" rx="1" fill="none" stroke="#e0e0e0" stroke-width="1.300"/><path d="M9.500 4.500v-1c0-2.500 4-2.500 4 0v1" stroke="#e0e0e0" stroke-width="1.200" fill="none"/></svg>
<svg style="left:964px;top:856px;" width="15" height="16" viewBox="0 0 15 16"><rect x="0.500" y="0.500" width="12" height="10.500" fill="#cfcfcf"/><rect x="0.500" y="0.500" width="12" height="5" fill="#e8e8e8"/><path d="M5.500 10h9l-4.500 4.500z" fill="#f4f4f4" stroke="#454545" stroke-width="0.800"/></svg>
<svg style="left:1104px;top:855px;" width="18" height="17" viewBox="0 0 18 17"><path d="M4.500 0.500c2.500 0 3.800 1.700 3.800 3.500c0 1.800-1.500 2.500-1.800 4.200h-4c-0.300-1.700-1.800-2.400-1.800-4.200c0-1.800 1.300-3.500 3.800-3.500z" fill="#f0e49a"/><rect x="2.800" y="8.500" width="3.400" height="2" fill="#b0b0b0"/><path d="M9.500 2.500h6.500v5M2 12v3h6" stroke="#9a9a9a" stroke-width="1.100" fill="none"/><path transform="translate(11 7.5) scale(1.15)" d="M0 0v7.200l1.800-1.600l1.300 2.900l1.200-0.600l-1.300-2.700h2.300z" fill="#f2f2f2"/></svg>
<svg style="left:1129px;top:854.5px;" width="12" height="17" viewBox="0 0 12 17"><path d="M6 0.500c3.500 0 5.300 2.300 5.300 5c0 2.500-2 3.500-2.400 6h-5.800c-0.400-2.500-2.400-3.500-2.400-6c0-2.700 1.800-5 5.300-5z" fill="#c4c4c4"/><rect x="3.200" y="12" width="5.600" height="3.500" fill="#8e8e8e"/></svg>
<svg style="left:1156px;top:855.5px;" width="15" height="15" viewBox="0 0 15 15"><circle cx="7.200" cy="7.200" r="6" fill="none" stroke="#d83434" stroke-width="1.500"/><path d="M3 3l8.500 8.500" stroke="#d83434" stroke-width="1.500"/><path d="M6 3.500v6l1.500-1.300l1 2.300l1-0.500l-1-2.200h1.900z" fill="#e8e8e8"/></svg>
<svg style="left:1184px;top:855px;" width="14" height="17" viewBox="0 0 14 17"><path transform="translate(0.5 0.5) scale(1.2)" d="M0 0v7.200l1.800-1.600l1.300 2.900l1.200-0.600l-1.300-2.700h2.300z" fill="#f2f2f2"/><rect x="5.500" y="8.500" width="7" height="6.500" fill="#5a6a80" stroke="#e8e8e8" stroke-width="1.100"/><path d="M5.500 10.500h7" stroke="#e8e8e8" stroke-width="1"/></svg>
<svg style="left:1211px;top:855px;" width="12" height="16" viewBox="0 0 12 16"><rect x="0.700" y="0.700" width="10" height="14.500" fill="#3c3c3c" stroke="#e4e4e4" stroke-width="1.300"/><path d="M2.500 4.200h6.500M2.500 8h6.500M2.500 11.800h6.500" stroke="#e4e4e4" stroke-width="1.300"/></svg>
<svg style="left:1233px;top:855px;" width="18" height="16" viewBox="0 0 18 16"><path d="M4 2.500v11.500h12" stroke="#e4e4e4" stroke-width="1.500" fill="none"/><path d="M4 0l-2.500 3.500h5z" fill="#e4e4e4"/><path d="M12.500 1l-3 5.500h2.500l-1.500 4.500l4-6h-2.500z" fill="#b8d8f8"/></svg>
<svg style="left:1336px;top:855px;" width="14" height="16" viewBox="0 0 14 16"><path d="M3.500 8v-5c0-1.200 1.600-1.200 1.600 0v-1.500c0-1.200 1.700-1.200 1.700 0v0.500c0-1.200 1.700-1.200 1.700 0v1.500c0-1.100 1.600-1.100 1.600 0v6.500c0 3-1.500 4.500-4 4.500c-2 0-3-1-4-3l-1.800-3.500c-0.500-1 0.800-1.700 1.500-0.800z" fill="#f4f4f4"/></svg>
<svg style="left:1361px;top:855px;" width="18" height="17" viewBox="0 0 18 17"><circle cx="6.500" cy="6.300" r="5.200" fill="#cfe8fa" stroke="#7ab8ee" stroke-width="1.300"/><path d="M10.500 10.500l5.500 5" stroke="#3d8ce0" stroke-width="2.600" stroke-linecap="round"/></svg>
<svg style="left:1389px;top:855.4px;" width="16" height="16" viewBox="0 0 16 16"><rect width="15" height="15" fill="#6eaef0"/><circle cx="6.500" cy="6.800" r="3.500" fill="#a8d0f8" stroke="#2c5a9a" stroke-width="1.100"/><path d="M9 9.500l4 3.800" stroke="#2c5a9a" stroke-width="1.500"/></svg>
<svg style="left:1414px;top:854.5px;" width="18" height="18" viewBox="0 0 18 18"><rect x="1" y="1" width="10.500" height="8" fill="none" stroke="#6eaef0" stroke-width="1.400"/><circle cx="10.500" cy="10.500" r="3.600" fill="#4a4a4a" stroke="#d8d8d8" stroke-width="1.200"/><path d="M13 13.200l3.500 3.300" stroke="#d8d8d8" stroke-width="1.500"/></svg>
<svg style="left:1441px;top:854px;" width="19" height="19" viewBox="0 0 19 19"><ellipse cx="9" cy="10" rx="8" ry="4" fill="none" stroke="#c4c4c4" stroke-width="1.200"/><path d="M9 2v15.500" stroke="#c4c4c4" stroke-width="1.200"/><path d="M9 0.500l-2 2.800h4z" fill="#c4c4c4"/><path d="M13.500 12l2.500 2l-3 0.500z" fill="#c4c4c4"/></svg>
<svg style="left:1469px;top:855px;" width="16" height="16" viewBox="0 0 16 16"><path d="M2.500 8a5.300 5.300 0 0 1 9.500-3.500" fill="none" stroke="#8fe060" stroke-width="2.200"/><path d="M13.500 8a5.300 5.300 0 0 1-9.500 3.500" fill="none" stroke="#8fe060" stroke-width="2.200"/><path d="M9.500 5.500h4.500v-4.500z M6 10.500h-4.500v4.500z" fill="#8fe060"/></svg>
<svg style="left:1490px;top:855px;" width="18" height="16" viewBox="0 0 18 16"><rect x="0.700" y="0.700" width="11" height="8" fill="#3c3c3c" stroke="#d8d8d8" stroke-width="1.200"/><rect x="0.700" y="0.700" width="11" height="2.200" fill="#d8d8d8"/><rect x="8" y="8" width="8" height="6.500" rx="1" fill="#d8d8d8"/><path d="M9.800 8v-1.500c0-2.300 4.400-2.300 4.400 0v1.500" stroke="#d8d8d8" stroke-width="1.200" fill="none"/></svg>
<svg style="left:1513.5px;top:854.5px;" width="17" height="17" viewBox="0 0 17 17"><rect x="0.700" y="5" width="10.500" height="10.500" fill="#e8e8e8" stroke="#d8d8d8" stroke-width="1"/><rect x="0.700" y="5" width="10.500" height="2.800" fill="#5aa0e0"/><path d="M4 2.500v-1.500h11.500v11h-2" stroke="#d8d8d8" stroke-width="1.100" fill="none"/><path d="M9.500 7l5-5M11 1.500h4v4" stroke="#f0a860" stroke-width="1.300" fill="none"/></svg>
<svg style="left:1540px;top:855px;" width="16" height="16" viewBox="0 0 16 16"><rect x="1.500" y="2.500" width="12.500" height="10" fill="#2a9cf0" stroke="#9ad0fa" stroke-width="1.600"/><path d="M0.500 3.500v-3h3M12 0.500h3v3M0.500 11.500v3h3M12 14.500h3v-3" stroke="#e0e0e0" stroke-width="0.900" fill="none"/></svg>
<div style="left:1558px;top:31px;width:0.7px;height:843px;background:#4c4c4c;"></div>
<div style="left:1558.7px;top:2px;width:1.3px;height:872px;background:#eef1f4;"></div>
<div style="left:0px;top:2px;width:1.2px;height:872px;background:#eef1f4;"></div>
<div style="left:213.500px;top:152.900px;width:298px;height:57.500px;background:linear-gradient(#ffffff 10%,#dcdde3);border:1px solid #9a9a9a;border-top-color:#c8c8c8;border-left-color:#c0c0c0;box-shadow:2px 2px 3px rgba(0,0,0,0.450);"></div>
<span class="t" style="left:218.3px;top:157.6px;font-size:11px;line-height:14px;color:#474747;font-weight:bold;transform:scaleX(1.0568);">Проверка</span>
<span class="t" style="left:277.8px;top:157.6px;font-size:11px;line-height:14px;color:#474747;font-weight:bold;transform:scaleX(1.0190);">вертикальности</span>
<span class="t" style="left:372.2px;top:157.6px;font-size:11px;line-height:14px;color:#474747;font-weight:bold;transform:scaleX(0.9842);">башенных</span>
<span class="t" style="left:432.4px;top:157.6px;font-size:11px;line-height:14px;color:#474747;font-weight:bold;transform:scaleX(1.1308);">сооружений</span>
<span class="t" style="left:218px;top:177.6px;font-size:11px;line-height:14px;color:#5a5a5a;transform:scaleX(1.0081);">Проверка вертикальности</span>
<span class="t" style="left:218px;top:193.0px;font-size:11px;line-height:14px;color:#5a5a5a;transform:scaleX(1.0168);">башенных сооружений</span>
</div></body></html>
